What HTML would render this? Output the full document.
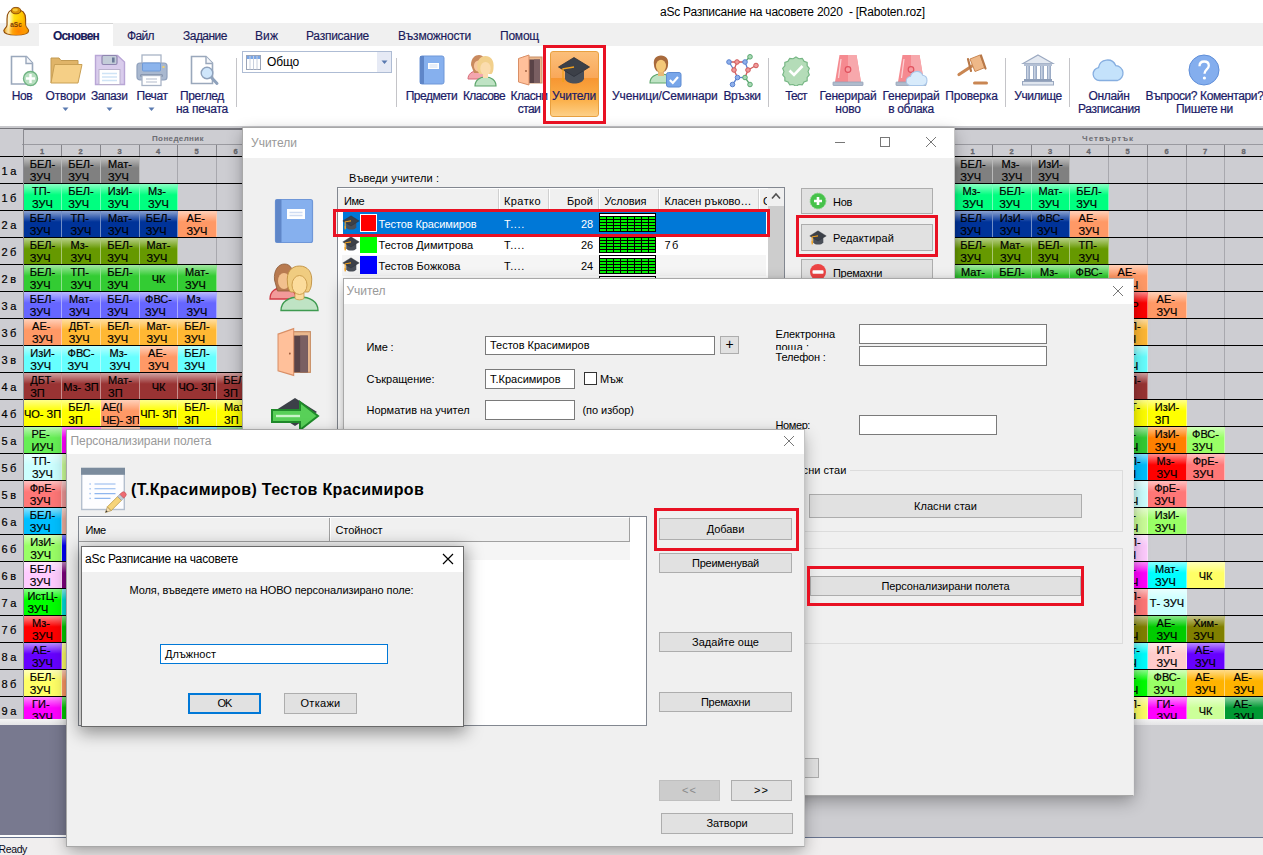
<!DOCTYPE html><html><head><meta charset="utf-8"><title>aSc</title>
<style>
html,body{margin:0;padding:0}
body{width:1263px;height:855px;position:relative;overflow:hidden;background:#f0f0f0;font-family:"Liberation Sans",sans-serif;}
.abs{position:absolute}

.dayh{font-size:8px;font-weight:bold;color:#6c6c72;text-align:center;line-height:19px}
.dayh span{display:inline-block}
.pnum{font-size:7.5px;font-weight:bold;color:#66666c;text-align:center;line-height:13px;-webkit-text-stroke:0.3px #66666c}
.cell{-webkit-text-stroke:0.2px #000;font-size:11px;line-height:13px;color:#000;text-align:center;overflow:hidden;display:flex;align-items:center;justify-content:center}
.cell span{display:block;text-align:left;white-space:nowrap;position:relative;top:1px}
.cell.L{justify-content:flex-start}
.cell.L span{text-align:left;padding-left:1px;letter-spacing:-0.3px}
.rowl{-webkit-text-stroke:0.2px #000;font-size:11px;color:#000;text-align:left;padding-left:1.5px;box-sizing:border-box;background:#cdcdd2}

.rlab{-webkit-text-stroke:0.2px #1a1a66;font-size:12px;line-height:14px;color:#1a1a66;text-align:center;white-space:nowrap}
.rlab span,.tab span,.ttl span,.cmb span{display:inline-block;white-space:nowrap}
.tab{-webkit-text-stroke:0.15px #1a1a5a;font-size:12px;line-height:14px;color:#1a1a5a;white-space:nowrap}
.tab.b{font-weight:bold}
.ttl{font-size:12px;line-height:15px;color:#000;white-space:nowrap}
.cmb{font-size:12px;line-height:14px;color:#000;white-space:nowrap}

.dlg{background:#f0f0f0;border:1px solid #a8a8a8;border-right-color:#c4c4c4;box-sizing:border-box;box-shadow:0 6px 16px -1px rgba(0,0,0,0.32),0 0 4px rgba(0,0,0,0.07)}
.dlg2{background:#f0f0f0;border:1px solid #6a6a6a;box-sizing:border-box;box-shadow:0 4px 16px 2px rgba(0,0,0,0.40)}
.dt{font-size:11px;line-height:13px;color:#000;white-space:nowrap}
.dt span,.wt span,.wt2 span,.hd span,.fit{display:inline-block;white-space:nowrap}
.wt{font-size:12px;line-height:14px;color:#999;white-space:nowrap}
.wt2{font-size:12px;line-height:14px;color:#000;white-space:nowrap}
.hd{font-size:16px;line-height:20px;font-weight:bold;color:#000;white-space:nowrap}
.btn{background:#e1e1e1;border:1px solid #adadad;box-sizing:border-box;font-size:11px;color:#000;text-align:center;white-space:nowrap}
.btn.dis{background:#cccccc;border-color:#bfbfbf;color:#8a8a8a}
.btn.def{border:2px solid #0078d7;line-height:17px !important}
.inp{background:#fff;border:1px solid #7a7a7a;box-sizing:border-box;font-size:11px;color:#000;padding-left:4px;white-space:nowrap;overflow:hidden}
.grp{border:1px solid #dcdcdc;box-sizing:border-box}
</style></head>
<body>
<!-- main window -->
<div class="abs" style="left:0;top:0;width:1263px;height:23px;background:#fff"></div>
<div class="abs ttl" style="left:660px;top:4.500px;"><span style="letter-spacing: -0.23px;">aSc Разписание на часовете 2020&nbsp; - [Raboten.roz]</span></div>
<div class="abs" style="left:0;top:23px;width:1263px;height:23px;background:#f0f0f0"></div>
<div class="abs" style="left:39px;top:23px;width:74px;height:23px;background:#fff;border-top:1px solid #d4d4d4;box-sizing:border-box"></div>
<div class="abs tab b" style="left:53px;top:29px"><span style="letter-spacing: -0.82px;">Основен</span></div>
<div class="abs tab" style="left:127px;top:29px"><span style="letter-spacing: -0.63px;">Файл</span></div>
<div class="abs tab" style="left:183px;top:29px"><span style="letter-spacing: -0.52px;">Задание</span></div>
<div class="abs tab" style="left:255px;top:29px"><span style="letter-spacing: 0.09px;">Виж</span></div>
<div class="abs tab" style="left:306px;top:29px"><span style="letter-spacing: -0.25px;">Разписание</span></div>
<div class="abs tab" style="left:398px;top:29px"><span style="letter-spacing: -0.21px;">Възможности</span></div>
<div class="abs tab" style="left:500px;top:29px"><span style="letter-spacing: -0.22px;">Помощ</span></div>
<svg class="abs" style="left:2px;top:5px" width="30" height="32" viewBox="0 0 30 32">
<defs><linearGradient id="bg" x1="0" y1="0" x2="1" y2="0"><stop offset="0" stop-color="#e89a00"></stop><stop offset="0.2" stop-color="#fffbe0"></stop><stop offset="0.42" stop-color="#ffe010"></stop><stop offset="0.75" stop-color="#ffc400"></stop><stop offset="1" stop-color="#e08600"></stop></linearGradient>
<radialGradient id="bg2" cx="0.6" cy="0.86" r="0.5"><stop offset="0" stop-color="#ff8200" stop-opacity="1"></stop><stop offset="0.5" stop-color="#ff9400" stop-opacity="0.8"></stop><stop offset="1" stop-color="#ffa800" stop-opacity="0"></stop></radialGradient></defs>
<path d="M14 4.500C21 4.500 23.600 8 23.600 14L23.600 20C23.600 22.600 26.600 23.400 26.600 25.800C26.600 28.800 20.500 30 14 30C7.500 30 1.800 28.800 1.800 25.800C1.800 23.400 5 22.600 5 20L5 14C5 8 7 4.500 14 4.500Z" fill="url(#bg)" stroke="#8e4a08" stroke-width="1.1"></path>
<path d="M14 4.500C21 4.500 23.600 8 23.600 14L23.600 20C23.600 22.600 26.600 23.400 26.600 25.800C26.600 28.800 20.500 30 14 30C7.500 30 1.800 28.800 1.800 25.800C1.800 23.400 5 22.600 5 20L5 14C5 8 7 4.500 14 4.500Z" fill="url(#bg2)"></path>
<ellipse cx="14" cy="5.600" rx="4.700" ry="3.200" fill="#d89208" stroke="#8a4a08" stroke-width="0.9"></ellipse>
<ellipse cx="13.300" cy="5" rx="2.600" ry="1.400" fill="#f8c838"></ellipse>
<text x="14" y="22.300" font-family="Liberation Sans, sans-serif" font-size="6.500" font-weight="bold" fill="#7a3a08" text-anchor="middle">aSc</text></svg>
<div class="abs" style="left:0;top:46px;width:1263px;height:81px;background:#fff"></div>
<div class="abs" style="left:0;top:126px;width:1263px;height:2px;background:#c8c8cc"></div>
<div class="abs" style="left:550px;top:51px;width:49px;height:66px;border-radius:3px;border:1px solid #e8a040;box-sizing:border-box;background:linear-gradient(to bottom,#fbbf7a 0%,#f9a85a 40%,#f79632 41%,#fbb04a 75%,#fdd088 100%)"></div>
<svg class="abs" style="left:9px;top:54px" width="32" height="34" viewBox="0 0 32 34">
<path d="M2.5 2.5h15l6 6.5v21h-21z" fill="#fff" stroke="#9aa8bc" stroke-width="1.6"></path>
<path d="M17 2.5v7h6.5" fill="#f4f6fa" stroke="#9aa8bc" stroke-width="1.4"></path>
<circle cx="21.5" cy="24.5" r="7" fill="#b8dfc0" stroke="#6fb382" stroke-width="1.4"></circle>
<path d="M21.5 20v9M17 24.5h9" stroke="#fff" stroke-width="2.4"></path></svg>
<svg class="abs" style="left:49px;top:54px" width="36" height="32" viewBox="0 0 36 32">
<path d="M2 29V4h8l2 2.5h17V11" fill="#e0b468" stroke="#c29a52" stroke-width="1"></path>
<path d="M2 29l3.5-18.5h27.5l-4 18.5z" fill="#f5cf86" stroke="#c9a055" stroke-width="1"></path></svg>
<svg class="abs" style="left:94px;top:54px" width="33" height="32" viewBox="0 0 33 32">
<path d="M1.5 1.5h22l7 6.5v22.5h-29z" fill="#d9ccec" stroke="#b9a6d6" stroke-width="1.4"></path>
<rect x="8" y="1.5" width="15" height="9" rx="1.5" fill="#c3ccd8" stroke="#8f86b0" stroke-width="1.2"></rect>
<rect x="18" y="3.5" width="2.6" height="5" fill="#6b7a98"></rect>
<rect x="5" y="15.5" width="21" height="15" fill="#fff" stroke="#b9b0cc" stroke-width="1"></rect>
<path d="M8 19.5h15M8 23h15M8 26.5h15" stroke="#cfe4f6" stroke-width="1.4"></path></svg>
<svg class="abs" style="left:135px;top:53px" width="34" height="34" viewBox="0 0 34 34">
<rect x="7" y="2" width="19" height="10" fill="#fff" stroke="#a9b4c6" stroke-width="1.3"></rect>
<rect x="2" y="10" width="30" height="17" rx="3" fill="#a9b8cf" stroke="#8fa0bc" stroke-width="1.2"></rect>
<rect x="7.5" y="10" width="18" height="8" rx="1" fill="#8cb4ec" stroke="#6f9ad8" stroke-width="1"></rect>
<rect x="27.5" y="13" width="2" height="2" fill="#f2d06a"></rect>
<rect x="5" y="21" width="23" height="3" rx="1.5" fill="#8493ad"></rect>
<rect x="7" y="22.5" width="19" height="10" fill="#fff" stroke="#a9b4c6" stroke-width="1.3"></rect>
<path d="M11 26h11M11 29h11" stroke="#b4bccb" stroke-width="1.2"></path></svg>
<svg class="abs" style="left:189px;top:54px" width="32" height="32" viewBox="0 0 32 32">
<path d="M2.5 2.5h14.5l6.5 6.5v20.5h-21z" fill="#fff" stroke="#9aa8bc" stroke-width="1.6"></path>
<path d="M17 2.5v7h6.5" fill="#f4f6fa" stroke="#9aa8bc" stroke-width="1.4"></path>
<path d="M22 23l6 6.5" stroke="#8fa2bc" stroke-width="3" stroke-linecap="round"></path>
<circle cx="18" cy="19" r="5.8" fill="#cfe6fb" stroke="#8fa2bc" stroke-width="1.4"></circle></svg>
<svg class="abs" style="left:419px;top:55px" width="26" height="30" viewBox="0 0 26 30">
<rect x="1" y="1" width="24" height="28" rx="2" fill="#86b0ee" stroke="#6f97d8" stroke-width="1"></rect>
<rect x="1" y="1" width="4" height="28" fill="#5f86c8"></rect>
<rect x="9" y="8" width="11" height="6" fill="#fff"></rect><path d="M10.5 10h8M10.5 12h8" stroke="#cfdcf2" stroke-width="1"></path></svg>
<svg class="abs" style="left:466px;top:53px" width="36" height="34" viewBox="0 0 36 34">
<path d="M2 26c0-5 4-8 9-8s9 3 9 8z" fill="#f4a6ae" stroke="#d66a78" stroke-width="1"></path>
<path d="M5 12c0-7 4-10 8-10s8 4 7 12l-2 6h-10z" fill="#c98a5e"></path>
<ellipse cx="12.5" cy="13" rx="4.6" ry="5.6" fill="#f7c79e"></ellipse>
<path d="M9 33c0-6 5-9 10.5-9s10.500 3 10.500 9z" fill="#bfe3c4" stroke="#5ea66c" stroke-width="1.2"></path>
<path d="M11.500 15c-1-8 3-12 8-12s9 4 8 12c0 3-1 5-2 6h-12c-1-1-2-3-2-6z" fill="#f2d08c"></path>
<ellipse cx="19.5" cy="15.500" rx="5.200" ry="6.600" fill="#fbdcae"></ellipse>
<rect x="17" y="21" width="5" height="4" fill="#fbdcae"></rect></svg>
<svg class="abs" style="left:516px;top:54px" width="28" height="32" viewBox="0 0 28 32">
<rect x="8" y="3" width="18" height="26" fill="#eab88e" stroke="#c98f66" stroke-width="1"></rect>
<rect x="11" y="5.500" width="13" height="23.500" fill="#5a4347"></rect>
<rect x="18" y="5.500" width="6" height="23.500" fill="#7a5f62"></rect>
<path d="M2.500 4.500l10.500-3.500v30l-10.500-3z" fill="#ffc09a" stroke="#d98f66" stroke-width="1"></path>
<circle cx="10" cy="17" r="0.900" fill="#9a5a3a"></circle></svg>
<svg class="abs" style="left:557px;top:55.500px" width="34" height="30" viewBox="0 0 34 30">
<path d="M8 15v8c2 3.500 5.500 4.500 9.500 4.500s7.500-1 9.500-4.500v-8z" fill="#4a4f58"></path>
<path d="M17 1.500l15.500 9.500-15.500 9.500-15.500-9.500z" fill="#3c4048" stroke="#2c3038" stroke-width="0.800"></path>
<path d="M17 11l-11 1.800v11" fill="none" stroke="#f0a020" stroke-width="1.400"></path>
<rect x="5.200" y="22" width="1.800" height="4" fill="#f0a020"></rect></svg>
<svg class="abs" style="left:648px;top:54px" width="36" height="34" viewBox="0 0 36 34">
<path d="M2 29c0-6 5-9 11-9s11 3 11 9z" fill="#bfe3c4" stroke="#5ea66c" stroke-width="1.100"></path>
<rect x="10" y="17" width="6" height="5" fill="#e8b878"></rect>
<path d="M6 11c-1-6 2-9.500 7-9.500s8 3.500 7 9.500c0 3-1.500 5-3 6.500h-8c-1.500-1.500-3-3.500-3-6.500z" fill="#a86a3c"></path>
<ellipse cx="13" cy="12" rx="5" ry="6.300" fill="#f4c878"></ellipse>
<rect x="18.500" y="18.500" width="14.500" height="14.500" rx="2" fill="#78a6ea" stroke="#5f8cd2" stroke-width="1"></rect>
<path d="M21.800 26l3 3 5.200-6" fill="none" stroke="#fff" stroke-width="2.200"></path></svg>
<svg class="abs" style="left:725px;top:53.500px" width="36" height="36" viewBox="0 0 36 36">
<g stroke-width="1.300" fill="none"><path d="M4 8l8 0M12 8l8 0" stroke="#d05a5a"></path><path d="M4 8l5 8" stroke="#5a82d0"></path><path d="M12 8l-3 8" stroke="#d05a5a"></path><path d="M20 8l5-5.500" stroke="#5aa870"></path><path d="M20 8l3 8" stroke="#5a82d0"></path><path d="M23 16l8-4.500" stroke="#d05a5a"></path><path d="M9 16l3.500 7.500" stroke="#d05a5a"></path><path d="M23 16l-3 7.500" stroke="#d05a5a"></path><path d="M12.500 23.500h7.500" stroke="#5a82d0"></path><path d="M12.500 23.500l-5 7" stroke="#5a82d0"></path><path d="M20 23.500l5 7" stroke="#5aa870"></path></g>
<g stroke-width="1"><circle cx="4" cy="8" r="2.300" fill="#8fb0ea" stroke="#5a82d0"></circle><circle cx="12" cy="8" r="2.300" fill="#f09a9a" stroke="#d05a5a"></circle><circle cx="20" cy="8" r="2.300" fill="#8fb0ea" stroke="#5a82d0"></circle><circle cx="25" cy="2.800" r="2.300" fill="#a8d8b4" stroke="#5aa870"></circle><circle cx="9" cy="16" r="2.300" fill="#f09a9a" stroke="#d05a5a"></circle><circle cx="23" cy="16" r="2.300" fill="#f09a9a" stroke="#d05a5a"></circle><circle cx="31" cy="11.500" r="2.300" fill="#f09a9a" stroke="#d05a5a"></circle><circle cx="12.500" cy="23.500" r="2.300" fill="#8fb0ea" stroke="#5a82d0"></circle><circle cx="20" cy="23.500" r="2.300" fill="#a8d8b4" stroke="#5aa870"></circle><circle cx="7.500" cy="30.500" r="2.300" fill="#8fb0ea" stroke="#5a82d0"></circle><circle cx="25" cy="30.500" r="2.300" fill="#a8d8b4" stroke="#5aa870"></circle></g></svg>
<svg class="abs" style="left:780px;top:54px" width="32" height="32" viewBox="0 0 32 32">
<path d="M16 1.500l3.200 2 3.700-.500 2 3.200 3.500 1.400v3.800l2.400 2.900-1.400 3.500 1.400 3.500-2.400 2.900v3.800l-3.500 1.400-2 3.200-3.700-.500-3.200 2-3.200-2-3.700.500-2-3.200-3.500-1.400v-3.800l-2.400-2.900 1.400-3.500-1.400-3.500 2.400-2.900v-3.800l3.500-1.400 2-3.200 3.700.500z" transform="translate(1.600 1.600) scale(0.900)" fill="#b4dcb8" stroke="#76b684" stroke-width="1.300"></path>
<path d="M9.500 16.500l4.500 4.500 8.500-9" fill="none" stroke="#fff" stroke-width="2.600"></path></svg>
<svg class="abs" style="left:832px;top:53px" width="32" height="34" viewBox="0 0 32 34">
<path d="M7.500 2h17l4.500 27h-26z" fill="#f58a90"></path>
<path d="M16 2h8.500l4.500 27h-13z" fill="#f7a8ac"></path>
<path d="M9 6l-2.500 19" stroke="#fbd0d2" stroke-width="1.300"></path>
<circle cx="16" cy="16.500" r="2.800" fill="#f79aa0" stroke="#e0525e" stroke-width="1.200"></circle>
<rect x="1" y="29" width="30" height="3.500" rx="0.500" fill="#b0bccd" stroke="#94a2b8" stroke-width="0.800"></rect></svg>
<svg class="abs" style="left:895px;top:53px" width="32" height="34" viewBox="0 0 32 34">
<path d="M7.500 2h17l4.500 27h-26z" fill="#f58a90"></path>
<path d="M16 2h8.500l4.500 27h-13z" fill="#f7a8ac"></path>
<path d="M9 6l-2.500 19" stroke="#fbd0d2" stroke-width="1.300"></path>
<circle cx="16" cy="16.500" r="2.800" fill="#f79aa0" stroke="#e0525e" stroke-width="1.200"></circle>
<rect x="1" y="29" width="30" height="3.500" rx="0.500" fill="#b0bccd" stroke="#94a2b8" stroke-width="0.800"></rect></svg><svg class="abs" style="left:905px;top:69px" width="24" height="18" viewBox="0 0 24 18">
<path d="M6 16.500a4.500 4.500 0 0 1-.500-9 6.500 6.500 0 0 1 12.300-1.200 5.200 5.200 0 0 1 0 10.200z" fill="#d8ebfb" stroke="#a8c6e8" stroke-width="1.100"></path></svg>
<svg class="abs" style="left:956px;top:53px" width="34" height="34" viewBox="0 0 34 34">
<path d="M3 21.500l13-8.500" stroke="#c98652" stroke-width="3.200" stroke-linecap="round"></path>
<path d="M14 6l10-4 5 12.500-10 4z" fill="#eeb888" stroke="#c98652" stroke-width="1"></path>
<path d="M13 4.500l3 12M26 1l4.500 13" stroke="#b87848" stroke-width="2.200" stroke-linecap="round" transform="translate(-1 1.500)"></path>
<rect x="17" y="28.500" width="15" height="3" rx="1.500" fill="#c98652"></rect></svg>
<svg class="abs" style="left:1021px;top:53px" width="34" height="34" viewBox="0 0 34 34">
<path d="M17 2l15 8.500h-30z" fill="#e4e9f1" stroke="#9aa8c0" stroke-width="1.200"></path>
<rect x="3" y="10.500" width="28" height="2.500" fill="#b4c0d4"></rect>
<g fill="#9cacc6"><rect x="5" y="13" width="4" height="13"></rect><rect x="12" y="13" width="4" height="13"></rect><rect x="19" y="13" width="4" height="13"></rect><rect x="26" y="13" width="4" height="13"></rect></g>
<g fill="#c8d2e2"><rect x="6" y="13" width="1.500" height="13"></rect><rect x="13" y="13" width="1.500" height="13"></rect><rect x="20" y="13" width="1.500" height="13"></rect><rect x="27" y="13" width="1.500" height="13"></rect></g>
<rect x="3" y="26" width="28" height="2.500" fill="#8e9eb8"></rect>
<rect x="1.500" y="28.500" width="31" height="3.500" fill="#dfe5ee" stroke="#9aa8c0" stroke-width="1"></rect></svg>
<svg class="abs" style="left:1091px;top:58px" width="36" height="24" viewBox="0 0 36 24">
<path d="M8.500 22.500a6.500 6.500 0 0 1-1-12.900 9 9 0 0 1 17.200-2 7.600 7.600 0 0 1 1.800 14.900z" fill="#c4e2fb" stroke="#86aee0" stroke-width="1.300"></path></svg>
<svg class="abs" style="left:1188px;top:54px" width="32" height="32" viewBox="0 0 32 32">
<circle cx="16" cy="16" r="15" fill="#84aeee" stroke="#5f8ed8" stroke-width="1"></circle>
<path d="M11.500 12.200c0-3 2-4.700 4.700-4.700s4.600 1.700 4.600 4.200c0 3.600-4.300 3.800-4.300 8" fill="none" stroke="#fff" stroke-width="2.300"></path>
<circle cx="16.400" cy="24" r="1.600" fill="#fff"></circle></svg>
<div class="abs rlab" style="left:-78px;top:89px;width:200px"><span style="letter-spacing: -0.41px;">Нов</span></div>
<div class="abs rlab" style="left:-34.5px;top:89px;width:200px"><span style="letter-spacing: -0.19px;">Отвори</span></div>
<svg class="abs" style="left:61.5px;top:107px" width="8" height="5"><path d="M0.5 0.5h6l-3 3.5z" fill="#5a7ab0"></path></svg>
<div class="abs rlab" style="left:9.200000000000003px;top:89px;width:200px"><span style="letter-spacing: -0.45px;">Запази</span></div>
<svg class="abs" style="left:105.5px;top:107px" width="8" height="5"><path d="M0.5 0.5h6l-3 3.5z" fill="#5a7ab0"></path></svg>
<div class="abs rlab" style="left:52px;top:89px;width:200px"><span style="letter-spacing: -0.41px;">Печат</span></div>
<svg class="abs" style="left:148px;top:107px" width="8" height="5"><path d="M0.5 0.5h6l-3 3.5z" fill="#5a7ab0"></path></svg>
<div class="abs rlab" style="left:102px;top:89px;width:200px"><span style="letter-spacing: -0.36px;">Преглед</span></div>
<div class="abs rlab" style="left:102px;top:102px;width:200px"><span style="letter-spacing: -0.23px;">на печата</span></div>
<div class="abs" style="left:236px;top:58px;width:1px;height:49px;background:#c4c4c8"></div>
<div class="abs" style="left:396px;top:58px;width:1px;height:49px;background:#c4c4c8"></div>
<div class="abs" style="left:768px;top:58px;width:1px;height:49px;background:#c4c4c8"></div>
<div class="abs" style="left:1005px;top:58px;width:1px;height:49px;background:#c4c4c8"></div>
<div class="abs" style="left:1069px;top:58px;width:1px;height:49px;background:#c4c4c8"></div>
<div class="abs" style="left:242px;top:51px;width:150px;height:22px;border:1px solid #aebcd4;box-sizing:border-box;background:#fff"></div>
<div class="abs" style="left:377px;top:52px;width:14px;height:20px;background:#e6eaf5"></div>
<svg class="abs" style="left:380.5px;top:60px" width="8" height="5"><path d="M0.5 0.5h6l-3 3.5z" fill="#5a7ab0"></path></svg>
<svg class="abs" style="left:246px;top:55px" width="15" height="15" viewBox="0 0 15 15"><rect x="0.500" y="0.500" width="14" height="14" fill="#fff" stroke="#9aa4b8" stroke-width="1"></rect><rect x="1" y="1" width="13" height="3" fill="#7aa6e6"></rect><path d="M4 1v13.500M7.500 1v13.500M11 1v13.500" stroke="#c8d0de" stroke-width="1"></path></svg>
<div class="abs cmb" style="left:267px;top:55px"><span style="letter-spacing: -0.16px;">Общо</span></div>
<div class="abs rlab" style="left:331.5px;top:89px;width:200px"><span style="letter-spacing: -0.48px;">Предмети</span></div>
<div class="abs rlab" style="left:384px;top:89px;width:200px"><span style="letter-spacing: -0.63px;">Класове</span></div>
<div class="abs rlab" style="left:429px;top:89px;width:200px"><span style="letter-spacing: -0.5px;">Класни</span></div>
<div class="abs rlab" style="left:429px;top:102px;width:200px"><span style="letter-spacing: -0.56px;">стаи</span></div>
<div class="abs rlab" style="left:474px;top:89px;width:200px"><span style="letter-spacing: -0.27px;">Учители</span></div>
<div class="abs rlab" style="left:564.8px;top:89px;width:200px"><span style="letter-spacing: -0.14px;">Ученици/Семинари</span></div>
<div class="abs rlab" style="left:642px;top:89px;width:200px"><span style="letter-spacing: -0.44px;">Връзки</span></div>
<div class="abs rlab" style="left:696px;top:89px;width:200px"><span style="letter-spacing: -0.88px;">Тест</span></div>
<div class="abs rlab" style="left:748px;top:89px;width:200px"><span style="letter-spacing: -0.23px;">Генерирай</span></div>
<div class="abs rlab" style="left:748px;top:102px;width:200px"><span style="letter-spacing: -0.15px;">ново</span></div>
<div class="abs rlab" style="left:811px;top:89px;width:200px"><span style="letter-spacing: -0.23px;">Генерирай</span></div>
<div class="abs rlab" style="left:811px;top:102px;width:200px"><span style="letter-spacing: -0.37px;">в облака</span></div>
<div class="abs rlab" style="left:871.5px;top:89px;width:200px"><span style="letter-spacing: -0.16px;">Проверка</span></div>
<div class="abs rlab" style="left:938px;top:89px;width:200px"><span style="letter-spacing: -0.47px;">Училище</span></div>
<div class="abs rlab" style="left:1009px;top:89px;width:200px"><span style="letter-spacing: -0.33px;">Онлайн</span></div>
<div class="abs rlab" style="left:1009px;top:102px;width:200px"><span style="letter-spacing: -0.34px;">Разписания</span></div>
<div class="abs rlab" style="left:1104.5px;top:89px;width:200px"><span style="letter-spacing: -0.39px;">Въпроси? Коментари?</span></div>
<div class="abs rlab" style="left:1104.5px;top:102px;width:200px"><span style="letter-spacing: -0.33px;">Пишете ни</span></div>
<div class="abs" style="left:0;top:128px;width:1263px;height:591px;overflow:hidden"><div class="abs" style="left:0;top:-128px;width:1263px;height:855px">
<div class="abs" style="left:0;top:128px;width:1263px;height:596px;background:#cdcdd2"></div>
<div class="abs" style="left:0;top:128px;width:1263px;height:2px;background:#75757b"></div>
<div class="abs" style="left:0;top:129px;width:23px;height:27px;background:#cdcdd2"></div>
<div class="abs dayh" style="left:23px;top:129px;width:310px;height:15px;"><span class="fit" style="letter-spacing: 0.37px;">Понеделник</span></div>
<div class="abs dayh" style="left:953px;top:129px;width:310px;height:15px;"><span class="fit" style="letter-spacing: 1px;">Четвъртък</span></div>
<div class="abs pnum" style="left:23px;top:145px;width:38px;height:11px;">1</div>
<div class="abs pnum" style="left:61px;top:145px;width:39px;height:11px;">2</div>
<div class="abs pnum" style="left:100px;top:145px;width:39px;height:11px;">3</div>
<div class="abs pnum" style="left:139px;top:145px;width:38px;height:11px;">4</div>
<div class="abs pnum" style="left:177px;top:145px;width:39px;height:11px;">5</div>
<div class="abs pnum" style="left:216px;top:145px;width:39px;height:11px;">6</div>
<div class="abs pnum" style="left:255px;top:145px;width:39px;height:11px;">7</div>
<div class="abs pnum" style="left:294px;top:145px;width:39px;height:11px;">8</div>
<div class="abs pnum" style="left:953px;top:145px;width:39px;height:11px;">1</div>
<div class="abs pnum" style="left:992px;top:145px;width:39px;height:11px;">2</div>
<div class="abs pnum" style="left:1031px;top:145px;width:38px;height:11px;">3</div>
<div class="abs pnum" style="left:1069px;top:145px;width:39px;height:11px;">4</div>
<div class="abs pnum" style="left:1108px;top:145px;width:39px;height:11px;">5</div>
<div class="abs pnum" style="left:1147px;top:145px;width:39px;height:11px;">6</div>
<div class="abs pnum" style="left:1186px;top:145px;width:38px;height:11px;">7</div>
<div class="abs pnum" style="left:1224px;top:145px;width:39px;height:11px;">8</div>
<div class="abs" style="left:22px;top:144px;width:1241px;height:1px;background:#9a9aa0"></div>
<div class="abs" style="left:23px;top:129px;width:1px;height:595px;background:#a8a8ae"></div>
<div class="abs" style="left:23px;top:129px;width:1px;height:27px;background:#85858b"></div>
<div class="abs" style="left:61px;top:145px;width:1px;height:579px;background:#a8a8ae"></div>
<div class="abs" style="left:61px;top:145px;width:1px;height:11px;background:#85858b"></div>
<div class="abs" style="left:100px;top:145px;width:1px;height:579px;background:#a8a8ae"></div>
<div class="abs" style="left:100px;top:145px;width:1px;height:11px;background:#85858b"></div>
<div class="abs" style="left:139px;top:145px;width:1px;height:579px;background:#a8a8ae"></div>
<div class="abs" style="left:139px;top:145px;width:1px;height:11px;background:#85858b"></div>
<div class="abs" style="left:177px;top:145px;width:1px;height:579px;background:#a8a8ae"></div>
<div class="abs" style="left:177px;top:145px;width:1px;height:11px;background:#85858b"></div>
<div class="abs" style="left:216px;top:145px;width:1px;height:579px;background:#a8a8ae"></div>
<div class="abs" style="left:216px;top:145px;width:1px;height:11px;background:#85858b"></div>
<div class="abs" style="left:255px;top:145px;width:1px;height:579px;background:#a8a8ae"></div>
<div class="abs" style="left:255px;top:145px;width:1px;height:11px;background:#85858b"></div>
<div class="abs" style="left:294px;top:145px;width:1px;height:579px;background:#a8a8ae"></div>
<div class="abs" style="left:294px;top:145px;width:1px;height:11px;background:#85858b"></div>
<div class="abs" style="left:333px;top:129px;width:1px;height:595px;background:#a8a8ae"></div>
<div class="abs" style="left:333px;top:129px;width:1px;height:27px;background:#85858b"></div>
<div class="abs" style="left:371px;top:145px;width:1px;height:579px;background:#a8a8ae"></div>
<div class="abs" style="left:371px;top:145px;width:1px;height:11px;background:#85858b"></div>
<div class="abs" style="left:410px;top:145px;width:1px;height:579px;background:#a8a8ae"></div>
<div class="abs" style="left:410px;top:145px;width:1px;height:11px;background:#85858b"></div>
<div class="abs" style="left:449px;top:145px;width:1px;height:579px;background:#a8a8ae"></div>
<div class="abs" style="left:449px;top:145px;width:1px;height:11px;background:#85858b"></div>
<div class="abs" style="left:488px;top:145px;width:1px;height:579px;background:#a8a8ae"></div>
<div class="abs" style="left:488px;top:145px;width:1px;height:11px;background:#85858b"></div>
<div class="abs" style="left:526px;top:145px;width:1px;height:579px;background:#a8a8ae"></div>
<div class="abs" style="left:526px;top:145px;width:1px;height:11px;background:#85858b"></div>
<div class="abs" style="left:565px;top:145px;width:1px;height:579px;background:#a8a8ae"></div>
<div class="abs" style="left:565px;top:145px;width:1px;height:11px;background:#85858b"></div>
<div class="abs" style="left:604px;top:145px;width:1px;height:579px;background:#a8a8ae"></div>
<div class="abs" style="left:604px;top:145px;width:1px;height:11px;background:#85858b"></div>
<div class="abs" style="left:643px;top:129px;width:1px;height:595px;background:#a8a8ae"></div>
<div class="abs" style="left:643px;top:129px;width:1px;height:27px;background:#85858b"></div>
<div class="abs" style="left:682px;top:145px;width:1px;height:579px;background:#a8a8ae"></div>
<div class="abs" style="left:682px;top:145px;width:1px;height:11px;background:#85858b"></div>
<div class="abs" style="left:720px;top:145px;width:1px;height:579px;background:#a8a8ae"></div>
<div class="abs" style="left:720px;top:145px;width:1px;height:11px;background:#85858b"></div>
<div class="abs" style="left:759px;top:145px;width:1px;height:579px;background:#a8a8ae"></div>
<div class="abs" style="left:759px;top:145px;width:1px;height:11px;background:#85858b"></div>
<div class="abs" style="left:798px;top:145px;width:1px;height:579px;background:#a8a8ae"></div>
<div class="abs" style="left:798px;top:145px;width:1px;height:11px;background:#85858b"></div>
<div class="abs" style="left:837px;top:145px;width:1px;height:579px;background:#a8a8ae"></div>
<div class="abs" style="left:837px;top:145px;width:1px;height:11px;background:#85858b"></div>
<div class="abs" style="left:875px;top:145px;width:1px;height:579px;background:#a8a8ae"></div>
<div class="abs" style="left:875px;top:145px;width:1px;height:11px;background:#85858b"></div>
<div class="abs" style="left:914px;top:145px;width:1px;height:579px;background:#a8a8ae"></div>
<div class="abs" style="left:914px;top:145px;width:1px;height:11px;background:#85858b"></div>
<div class="abs" style="left:953px;top:129px;width:1px;height:595px;background:#a8a8ae"></div>
<div class="abs" style="left:953px;top:129px;width:1px;height:27px;background:#85858b"></div>
<div class="abs" style="left:992px;top:145px;width:1px;height:579px;background:#a8a8ae"></div>
<div class="abs" style="left:992px;top:145px;width:1px;height:11px;background:#85858b"></div>
<div class="abs" style="left:1031px;top:145px;width:1px;height:579px;background:#a8a8ae"></div>
<div class="abs" style="left:1031px;top:145px;width:1px;height:11px;background:#85858b"></div>
<div class="abs" style="left:1069px;top:145px;width:1px;height:579px;background:#a8a8ae"></div>
<div class="abs" style="left:1069px;top:145px;width:1px;height:11px;background:#85858b"></div>
<div class="abs" style="left:1108px;top:145px;width:1px;height:579px;background:#a8a8ae"></div>
<div class="abs" style="left:1108px;top:145px;width:1px;height:11px;background:#85858b"></div>
<div class="abs" style="left:1147px;top:145px;width:1px;height:579px;background:#a8a8ae"></div>
<div class="abs" style="left:1147px;top:145px;width:1px;height:11px;background:#85858b"></div>
<div class="abs" style="left:1186px;top:145px;width:1px;height:579px;background:#a8a8ae"></div>
<div class="abs" style="left:1186px;top:145px;width:1px;height:11px;background:#85858b"></div>
<div class="abs" style="left:1224px;top:145px;width:1px;height:579px;background:#a8a8ae"></div>
<div class="abs" style="left:1224px;top:145px;width:1px;height:11px;background:#85858b"></div>
<div class="abs" style="left:1263px;top:129px;width:1px;height:595px;background:#a8a8ae"></div>
<div class="abs" style="left:1263px;top:129px;width:1px;height:27px;background:#85858b"></div>
<div class="abs cell" style="left:24px;top:157px;width:37px;height:26px;background:linear-gradient(to bottom,#c5c5c5 0%,#808080 42%,#808080 100%)"><span>БЕЛ-<br>ЗУЧ</span></div>
<div class="abs" style="left:61px;top:157px;width:1px;height:26px;background:#b9b9b9"></div>
<div class="abs cell" style="left:62px;top:157px;width:38px;height:26px;background:linear-gradient(to bottom,#c5c5c5 0%,#808080 42%,#808080 100%)"><span>БЕЛ-<br>ЗУЧ</span></div>
<div class="abs" style="left:100px;top:157px;width:1px;height:26px;background:#b9b9b9"></div>
<div class="abs cell" style="left:101px;top:157px;width:38px;height:26px;background:linear-gradient(to bottom,#c5c5c5 0%,#808080 42%,#808080 100%)"><span>Мат-<br>ЗУЧ</span></div>
<div class="abs" style="left:139px;top:157px;width:1px;height:26px;background:#b9b9b9"></div>
<div class="abs cell" style="left:24px;top:184px;width:37px;height:26px;background:linear-gradient(to bottom,#8cffc5 0%,#00ff80 42%,#00ff80 100%)"><span>ТП-<br>ЗУЧ</span></div>
<div class="abs" style="left:61px;top:184px;width:1px;height:26px;background:#72ffb9"></div>
<div class="abs cell" style="left:62px;top:184px;width:38px;height:26px;background:linear-gradient(to bottom,#8cffc5 0%,#00ff80 42%,#00ff80 100%)"><span>БЕЛ-<br>ЗУЧ</span></div>
<div class="abs" style="left:100px;top:184px;width:1px;height:26px;background:#72ffb9"></div>
<div class="abs cell" style="left:101px;top:184px;width:38px;height:26px;background:linear-gradient(to bottom,#8cffc5 0%,#00ff80 42%,#00ff80 100%)"><span>ИзИ-<br>ЗУЧ</span></div>
<div class="abs" style="left:139px;top:184px;width:1px;height:26px;background:#72ffb9"></div>
<div class="abs cell" style="left:140px;top:184px;width:37px;height:26px;background:linear-gradient(to bottom,#8cffc5 0%,#00ff80 42%,#00ff80 100%)"><span>Мз-<br>ЗУЧ</span></div>
<div class="abs" style="left:177px;top:184px;width:1px;height:26px;background:#72ffb9"></div>
<div class="abs cell" style="left:24px;top:211px;width:37px;height:26px;background:linear-gradient(to bottom,#8ca3d1 0%,#003399 42%,#003399 100%)"><span>БЕЛ-<br>ЗУЧ</span></div>
<div class="abs" style="left:61px;top:211px;width:1px;height:26px;background:#728ec6"></div>
<div class="abs cell" style="left:62px;top:211px;width:38px;height:26px;background:linear-gradient(to bottom,#8ca3d1 0%,#003399 42%,#003399 100%)"><span>ТП-<br>ЗУЧ</span></div>
<div class="abs" style="left:100px;top:211px;width:1px;height:26px;background:#728ec6"></div>
<div class="abs cell" style="left:101px;top:211px;width:38px;height:26px;background:linear-gradient(to bottom,#8ca3d1 0%,#003399 42%,#003399 100%)"><span>Мат-<br>ЗУЧ</span></div>
<div class="abs" style="left:139px;top:211px;width:1px;height:26px;background:#728ec6"></div>
<div class="abs cell" style="left:140px;top:211px;width:37px;height:26px;background:linear-gradient(to bottom,#8ca3d1 0%,#003399 42%,#003399 100%)"><span>БЕЛ-<br>ЗУЧ</span></div>
<div class="abs" style="left:177px;top:211px;width:1px;height:26px;background:#728ec6"></div>
<div class="abs cell" style="left:178px;top:211px;width:38px;height:26px;background:linear-gradient(to bottom,#ffd1ba 0%,#ff9966 42%,#ff9966 100%)"><span>АЕ-<br>ЗУЧ</span></div>
<div class="abs" style="left:216px;top:211px;width:1px;height:26px;background:#ffc6aa"></div>
<div class="abs cell" style="left:24px;top:238px;width:37px;height:26px;background:linear-gradient(to bottom,#bad18c 0%,#669900 42%,#669900 100%)"><span>БЕЛ-<br>ЗУЧ</span></div>
<div class="abs" style="left:61px;top:238px;width:1px;height:26px;background:#aac672"></div>
<div class="abs cell" style="left:62px;top:238px;width:38px;height:26px;background:linear-gradient(to bottom,#bad18c 0%,#669900 42%,#669900 100%)"><span>Мз-<br>ЗУЧ</span></div>
<div class="abs" style="left:100px;top:238px;width:1px;height:26px;background:#aac672"></div>
<div class="abs cell" style="left:101px;top:238px;width:38px;height:26px;background:linear-gradient(to bottom,#bad18c 0%,#669900 42%,#669900 100%)"><span>БЕЛ-<br>ЗУЧ</span></div>
<div class="abs" style="left:139px;top:238px;width:1px;height:26px;background:#aac672"></div>
<div class="abs cell" style="left:140px;top:238px;width:37px;height:26px;background:linear-gradient(to bottom,#bad18c 0%,#669900 42%,#669900 100%)"><span>Мат-<br>ЗУЧ</span></div>
<div class="abs" style="left:177px;top:238px;width:1px;height:26px;background:#aac672"></div>
<div class="abs cell" style="left:24px;top:265px;width:37px;height:26px;background:linear-gradient(to bottom,#a3e8a3 0%,#33cc33 42%,#33cc33 100%)"><span>БЕЛ-<br>ЗУЧ</span></div>
<div class="abs" style="left:61px;top:265px;width:1px;height:26px;background:#8ee28e"></div>
<div class="abs cell" style="left:62px;top:265px;width:38px;height:26px;background:linear-gradient(to bottom,#a3e8a3 0%,#33cc33 42%,#33cc33 100%)"><span>ТП-<br>ЗУЧ</span></div>
<div class="abs" style="left:100px;top:265px;width:1px;height:26px;background:#8ee28e"></div>
<div class="abs cell" style="left:101px;top:265px;width:38px;height:26px;background:linear-gradient(to bottom,#a3e8a3 0%,#33cc33 42%,#33cc33 100%)"><span>БЕЛ-<br>ЗУЧ</span></div>
<div class="abs" style="left:139px;top:265px;width:1px;height:26px;background:#8ee28e"></div>
<div class="abs cell one" style="left:140px;top:265px;width:37px;height:26px;background:linear-gradient(to bottom,#a3e8a3 0%,#33cc33 42%,#33cc33 100%)"><span>ЧК</span></div>
<div class="abs" style="left:177px;top:265px;width:1px;height:26px;background:#8ee28e"></div>
<div class="abs cell" style="left:178px;top:265px;width:38px;height:26px;background:linear-gradient(to bottom,#a3e8a3 0%,#33cc33 42%,#33cc33 100%)"><span>Мат-<br>ЗУЧ</span></div>
<div class="abs" style="left:216px;top:265px;width:1px;height:26px;background:#8ee28e"></div>
<div class="abs cell" style="left:24px;top:292px;width:37px;height:26px;background:linear-gradient(to bottom,#babaff 0%,#6666ff 42%,#6666ff 100%)"><span>БЕЛ-<br>ЗУЧ</span></div>
<div class="abs" style="left:61px;top:292px;width:1px;height:26px;background:#aaaaff"></div>
<div class="abs cell" style="left:62px;top:292px;width:38px;height:26px;background:linear-gradient(to bottom,#babaff 0%,#6666ff 42%,#6666ff 100%)"><span>Мат-<br>ЗУЧ</span></div>
<div class="abs" style="left:100px;top:292px;width:1px;height:26px;background:#aaaaff"></div>
<div class="abs cell" style="left:101px;top:292px;width:38px;height:26px;background:linear-gradient(to bottom,#babaff 0%,#6666ff 42%,#6666ff 100%)"><span>БЕЛ-<br>ЗУЧ</span></div>
<div class="abs" style="left:139px;top:292px;width:1px;height:26px;background:#aaaaff"></div>
<div class="abs cell" style="left:140px;top:292px;width:37px;height:26px;background:linear-gradient(to bottom,#babaff 0%,#6666ff 42%,#6666ff 100%)"><span>ФВС-<br>ЗУЧ</span></div>
<div class="abs" style="left:177px;top:292px;width:1px;height:26px;background:#aaaaff"></div>
<div class="abs cell" style="left:178px;top:292px;width:38px;height:26px;background:linear-gradient(to bottom,#babaff 0%,#6666ff 42%,#6666ff 100%)"><span>Мз-<br>ЗУЧ</span></div>
<div class="abs" style="left:216px;top:292px;width:1px;height:26px;background:#aaaaff"></div>
<div class="abs cell" style="left:24px;top:319px;width:37px;height:26px;background:linear-gradient(to bottom,#ffd1ba 0%,#ff9966 42%,#ff9966 100%)"><span>АЕ-<br>ЗУЧ</span></div>
<div class="abs" style="left:61px;top:319px;width:1px;height:26px;background:#ffc6aa"></div>
<div class="abs cell" style="left:62px;top:319px;width:38px;height:26px;background:linear-gradient(to bottom,#ffdfa3 0%,#ffb833 42%,#ffb833 100%)"><span>ДБТ-<br>ЗУЧ</span></div>
<div class="abs" style="left:100px;top:319px;width:1px;height:26px;background:#ffd78e"></div>
<div class="abs cell" style="left:101px;top:319px;width:38px;height:26px;background:linear-gradient(to bottom,#ffdfa3 0%,#ffb833 42%,#ffb833 100%)"><span>БЕЛ-<br>ЗУЧ</span></div>
<div class="abs" style="left:139px;top:319px;width:1px;height:26px;background:#ffd78e"></div>
<div class="abs cell" style="left:140px;top:319px;width:37px;height:26px;background:linear-gradient(to bottom,#ffdfa3 0%,#ffb833 42%,#ffb833 100%)"><span>Мат-<br>ЗУЧ</span></div>
<div class="abs" style="left:177px;top:319px;width:1px;height:26px;background:#ffd78e"></div>
<div class="abs cell" style="left:178px;top:319px;width:38px;height:26px;background:linear-gradient(to bottom,#ffdfa3 0%,#ffb833 42%,#ffb833 100%)"><span>БЕЛ-<br>ЗУЧ</span></div>
<div class="abs" style="left:216px;top:319px;width:1px;height:26px;background:#ffd78e"></div>
<div class="abs cell" style="left:24px;top:346px;width:37px;height:26px;background:linear-gradient(to bottom,#baffff 0%,#66ffff 42%,#66ffff 100%)"><span>ИзИ-<br>ЗУЧ</span></div>
<div class="abs" style="left:61px;top:346px;width:1px;height:26px;background:#aaffff"></div>
<div class="abs cell" style="left:62px;top:346px;width:38px;height:26px;background:linear-gradient(to bottom,#baffff 0%,#66ffff 42%,#66ffff 100%)"><span>ФВС-<br>ЗУЧ</span></div>
<div class="abs" style="left:100px;top:346px;width:1px;height:26px;background:#aaffff"></div>
<div class="abs cell" style="left:101px;top:346px;width:38px;height:26px;background:linear-gradient(to bottom,#baffff 0%,#66ffff 42%,#66ffff 100%)"><span>Мз-<br>ЗУЧ</span></div>
<div class="abs" style="left:139px;top:346px;width:1px;height:26px;background:#aaffff"></div>
<div class="abs cell" style="left:140px;top:346px;width:37px;height:26px;background:linear-gradient(to bottom,#ffd1ba 0%,#ff9966 42%,#ff9966 100%)"><span>АЕ-<br>ЗУЧ</span></div>
<div class="abs" style="left:177px;top:346px;width:1px;height:26px;background:#ffc6aa"></div>
<div class="abs cell" style="left:178px;top:346px;width:38px;height:26px;background:linear-gradient(to bottom,#baffff 0%,#66ffff 42%,#66ffff 100%)"><span>БЕЛ-<br>ЗУЧ</span></div>
<div class="abs" style="left:216px;top:346px;width:1px;height:26px;background:#aaffff"></div>
<div class="abs cell" style="left:24px;top:373px;width:37px;height:26px;background:linear-gradient(to bottom,#d1a3a3 0%,#993333 42%,#993333 100%)"><span>ДБТ-<br>ЗП</span></div>
<div class="abs" style="left:61px;top:373px;width:1px;height:26px;background:#c68e8e"></div>
<div class="abs cell one" style="left:62px;top:373px;width:38px;height:26px;background:linear-gradient(to bottom,#d1a3a3 0%,#993333 42%,#993333 100%)"><span>Мз- ЗП</span></div>
<div class="abs" style="left:100px;top:373px;width:1px;height:26px;background:#c68e8e"></div>
<div class="abs cell" style="left:101px;top:373px;width:38px;height:26px;background:linear-gradient(to bottom,#d1a3a3 0%,#993333 42%,#993333 100%)"><span>Мат-<br>ЗП</span></div>
<div class="abs" style="left:139px;top:373px;width:1px;height:26px;background:#c68e8e"></div>
<div class="abs cell one" style="left:140px;top:373px;width:37px;height:26px;background:linear-gradient(to bottom,#d1a3a3 0%,#993333 42%,#993333 100%)"><span>ЧК</span></div>
<div class="abs" style="left:177px;top:373px;width:1px;height:26px;background:#c68e8e"></div>
<div class="abs cell one" style="left:178px;top:373px;width:38px;height:26px;background:linear-gradient(to bottom,#d1a3a3 0%,#993333 42%,#993333 100%)"><span>ЧО- ЗП</span></div>
<div class="abs" style="left:216px;top:373px;width:1px;height:26px;background:#c68e8e"></div>
<div class="abs cell" style="left:217px;top:373px;width:38px;height:26px;background:linear-gradient(to bottom,#d1a3a3 0%,#993333 42%,#993333 100%)"><span>БЕЛ-<br>ЗП</span></div>
<div class="abs" style="left:255px;top:373px;width:1px;height:26px;background:#c68e8e"></div>
<div class="abs cell one" style="left:24px;top:400px;width:37px;height:26px;background:linear-gradient(to bottom,#ffff8c 0%,#ffff00 42%,#ffff00 100%)"><span>ЧО- ЗП</span></div>
<div class="abs" style="left:61px;top:400px;width:1px;height:26px;background:#ffff72"></div>
<div class="abs cell" style="left:62px;top:400px;width:38px;height:26px;background:linear-gradient(to bottom,#ffff8c 0%,#ffff00 42%,#ffff00 100%)"><span>БЕЛ-<br>ЗП</span></div>
<div class="abs" style="left:100px;top:400px;width:1px;height:26px;background:#ffff72"></div>
<div class="abs cell L" style="left:101px;top:400px;width:38px;height:26px;background:linear-gradient(to bottom,#ffd1ba 0%,#ff9966 42%,#ff9966 100%)"><span>АЕ(I<br>ЧЕ)- ЗП</span></div>
<div class="abs" style="left:139px;top:400px;width:1px;height:26px;background:#ffc6aa"></div>
<div class="abs cell one" style="left:140px;top:400px;width:37px;height:26px;background:linear-gradient(to bottom,#ffff8c 0%,#ffff00 42%,#ffff00 100%)"><span>ЧП- ЗП</span></div>
<div class="abs" style="left:177px;top:400px;width:1px;height:26px;background:#ffff72"></div>
<div class="abs cell" style="left:178px;top:400px;width:38px;height:26px;background:linear-gradient(to bottom,#ffff8c 0%,#ffff00 42%,#ffff00 100%)"><span>БЕЛ-<br>ЗП</span></div>
<div class="abs" style="left:216px;top:400px;width:1px;height:26px;background:#ffff72"></div>
<div class="abs cell" style="left:217px;top:400px;width:38px;height:26px;background:linear-gradient(to bottom,#ffff8c 0%,#ffff00 42%,#ffff00 100%)"><span>Мат-<br>ЗП</span></div>
<div class="abs" style="left:255px;top:400px;width:1px;height:26px;background:#ffff72"></div>
<div class="abs cell" style="left:24px;top:427px;width:37px;height:26px;background:linear-gradient(to bottom,#baf7b2 0%,#66ee55 42%,#66ee55 100%)"><span>РЕ-<br>ИУЧ</span></div>
<div class="abs" style="left:61px;top:427px;width:1px;height:26px;background:#aaf5a1"></div>
<div class="abs cell one" style="left:62px;top:427px;width:38px;height:26px;background:linear-gradient(to bottom,#ff8cff 0%,#ff00ff 42%,#ff00ff 100%)"><span></span></div>
<div class="abs" style="left:100px;top:427px;width:1px;height:26px;background:#ff72ff"></div>
<div class="abs cell" style="left:24px;top:454px;width:37px;height:26px;background:linear-gradient(to bottom,#e8ffff 0%,#ccffff 42%,#ccffff 100%)"><span>ТП-<br>ЗУЧ</span></div>
<div class="abs" style="left:61px;top:454px;width:1px;height:26px;background:#e2ffff"></div>
<div class="abs cell one" style="left:62px;top:454px;width:38px;height:26px;background:linear-gradient(to bottom,#e8ffd1 0%,#ccff99 42%,#ccff99 100%)"><span></span></div>
<div class="abs" style="left:100px;top:454px;width:1px;height:26px;background:#e2ffc6"></div>
<div class="abs cell" style="left:24px;top:481px;width:37px;height:26px;background:linear-gradient(to bottom,#ffc1c1 0%,#ff7777 42%,#ff7777 100%)"><span>ФрЕ-<br>ЗУЧ</span></div>
<div class="abs" style="left:61px;top:481px;width:1px;height:26px;background:#ffb4b4"></div>
<div class="abs cell one" style="left:62px;top:481px;width:38px;height:26px;background:linear-gradient(to bottom,#f7d1d1 0%,#ee9999 42%,#ee9999 100%)"><span></span></div>
<div class="abs" style="left:100px;top:481px;width:1px;height:26px;background:#f5c6c6"></div>
<div class="abs cell" style="left:24px;top:508px;width:37px;height:26px;background:linear-gradient(to bottom,#8ce2ff 0%,#00bfff 42%,#00bfff 100%)"><span>БЕЛ-<br>ЗУЧ</span></div>
<div class="abs" style="left:61px;top:508px;width:1px;height:26px;background:#72dbff"></div>
<div class="abs cell one" style="left:62px;top:508px;width:38px;height:26px;background:linear-gradient(to bottom,#f8dbd4 0%,#f0b0a0 42%,#f0b0a0 100%)"><span></span></div>
<div class="abs" style="left:100px;top:508px;width:1px;height:26px;background:#f6d3ca"></div>
<div class="abs cell" style="left:24px;top:535px;width:37px;height:26px;background:linear-gradient(to bottom,#d1ffba 0%,#99ff66 42%,#99ff66 100%)"><span>ИзИ-<br>ЗУЧ</span></div>
<div class="abs" style="left:61px;top:535px;width:1px;height:26px;background:#c6ffaa"></div>
<div class="abs cell one" style="left:62px;top:535px;width:38px;height:26px;background:linear-gradient(to bottom,#8c8cff 0%,#0000ff 42%,#0000ff 100%)"><span></span></div>
<div class="abs" style="left:100px;top:535px;width:1px;height:26px;background:#7272ff"></div>
<div class="abs cell" style="left:24px;top:562px;width:37px;height:26px;background:linear-gradient(to bottom,#ffe8ff 0%,#ffccff 42%,#ffccff 100%)"><span>БЕЛ-<br>ЗУЧ</span></div>
<div class="abs" style="left:61px;top:562px;width:1px;height:26px;background:#ffe2ff"></div>
<div class="abs cell one" style="left:62px;top:562px;width:38px;height:26px;background:linear-gradient(to bottom,#c58cc5 0%,#800080 42%,#800080 100%)"><span></span></div>
<div class="abs" style="left:100px;top:562px;width:1px;height:26px;background:#b972b9"></div>
<div class="abs cell" style="left:24px;top:589px;width:37px;height:26px;background:linear-gradient(to bottom,#8cff8c 0%,#00ff00 42%,#00ff00 100%)"><span>ИстЦ-<br>ЗУЧ</span></div>
<div class="abs" style="left:61px;top:589px;width:1px;height:26px;background:#72ff72"></div>
<div class="abs cell one" style="left:62px;top:589px;width:38px;height:26px;background:linear-gradient(to bottom,#8cf1f1 0%,#00e0e0 42%,#00e0e0 100%)"><span></span></div>
<div class="abs" style="left:100px;top:589px;width:1px;height:26px;background:#72eded"></div>
<div class="abs cell" style="left:24px;top:616px;width:37px;height:26px;background:linear-gradient(to bottom,#ff8c8c 0%,#ff0000 42%,#ff0000 100%)"><span>Мз-<br>ЗУЧ</span></div>
<div class="abs" style="left:61px;top:616px;width:1px;height:26px;background:#ff7272"></div>
<div class="abs cell one" style="left:62px;top:616px;width:38px;height:26px;background:linear-gradient(to bottom,#8ce88c 0%,#00cc00 42%,#00cc00 100%)"><span></span></div>
<div class="abs" style="left:100px;top:616px;width:1px;height:26px;background:#72e272"></div>
<div class="abs cell" style="left:24px;top:643px;width:37px;height:26px;background:linear-gradient(to bottom,#ba8cff 0%,#6600ff 42%,#6600ff 100%)"><span>АЕ-<br>ЗУЧ</span></div>
<div class="abs" style="left:61px;top:643px;width:1px;height:26px;background:#aa72ff"></div>
<div class="abs cell one" style="left:62px;top:643px;width:38px;height:26px;background:linear-gradient(to bottom,#ffffba 0%,#ffff66 42%,#ffff66 100%)"><span></span></div>
<div class="abs" style="left:100px;top:643px;width:1px;height:26px;background:#ffffaa"></div>
<div class="abs cell" style="left:24px;top:670px;width:37px;height:26px;background:linear-gradient(to bottom,#ffffba 0%,#ffff66 42%,#ffff66 100%)"><span>БЕЛ-<br>ЗУЧ</span></div>
<div class="abs" style="left:61px;top:670px;width:1px;height:26px;background:#ffffaa"></div>
<div class="abs cell one" style="left:62px;top:670px;width:38px;height:26px;background:linear-gradient(to bottom,#ffd1ba 0%,#ff9966 42%,#ff9966 100%)"><span></span></div>
<div class="abs" style="left:100px;top:670px;width:1px;height:26px;background:#ffc6aa"></div>
<div class="abs cell" style="left:24px;top:697px;width:37px;height:26px;background:linear-gradient(to bottom,#ff8cff 0%,#ff00ff 42%,#ff00ff 100%)"><span>ГИ-<br>ЗУЧ</span></div>
<div class="abs" style="left:61px;top:697px;width:1px;height:26px;background:#ff72ff"></div>
<div class="abs cell one" style="left:62px;top:697px;width:38px;height:26px;background:linear-gradient(to bottom,#8ce88c 0%,#00cc00 42%,#00cc00 100%)"><span></span></div>
<div class="abs" style="left:100px;top:697px;width:1px;height:26px;background:#72e272"></div>
<div class="abs cell one" style="left:101px;top:427px;width:38px;height:26px;background:linear-gradient(to bottom,#ffd1ba 0%,#ff9966 42%,#ff9966 100%)"><span></span></div>
<div class="abs" style="left:139px;top:427px;width:1px;height:26px;background:#ffc6aa"></div>
<div class="abs cell one" style="left:140px;top:427px;width:37px;height:26px;background:linear-gradient(to bottom,#8ca3d1 0%,#003399 42%,#003399 100%)"><span></span></div>
<div class="abs" style="left:177px;top:427px;width:1px;height:26px;background:#728ec6"></div>
<div class="abs cell one" style="left:178px;top:427px;width:38px;height:26px;background:linear-gradient(to bottom,#8ce2ff 0%,#00bfff 42%,#00bfff 100%)"><span></span></div>
<div class="abs" style="left:216px;top:427px;width:1px;height:26px;background:#72dbff"></div>
<div class="abs cell one" style="left:217px;top:427px;width:38px;height:26px;background:linear-gradient(to bottom,#a3e8a3 0%,#33cc33 42%,#33cc33 100%)"><span></span></div>
<div class="abs" style="left:255px;top:427px;width:1px;height:26px;background:#8ee28e"></div>
<div class="abs cell" style="left:954px;top:157px;width:38px;height:26px;background:linear-gradient(to bottom,#c5c5c5 0%,#808080 42%,#808080 100%)"><span>БЕЛ-<br>ЗУЧ</span></div>
<div class="abs" style="left:992px;top:157px;width:1px;height:26px;background:#b9b9b9"></div>
<div class="abs cell" style="left:993px;top:157px;width:38px;height:26px;background:linear-gradient(to bottom,#c5c5c5 0%,#808080 42%,#808080 100%)"><span>Мз-<br>ЗУЧ</span></div>
<div class="abs" style="left:1031px;top:157px;width:1px;height:26px;background:#b9b9b9"></div>
<div class="abs cell" style="left:1032px;top:157px;width:37px;height:26px;background:linear-gradient(to bottom,#c5c5c5 0%,#808080 42%,#808080 100%)"><span>ИзИ-<br>ЗУЧ</span></div>
<div class="abs" style="left:1069px;top:157px;width:1px;height:26px;background:#b9b9b9"></div>
<div class="abs cell" style="left:954px;top:184px;width:38px;height:26px;background:linear-gradient(to bottom,#8cffc5 0%,#00ff80 42%,#00ff80 100%)"><span>Мз-<br>ЗУЧ</span></div>
<div class="abs" style="left:992px;top:184px;width:1px;height:26px;background:#72ffb9"></div>
<div class="abs cell" style="left:993px;top:184px;width:38px;height:26px;background:linear-gradient(to bottom,#8cffc5 0%,#00ff80 42%,#00ff80 100%)"><span>БЕЛ-<br>ЗУЧ</span></div>
<div class="abs" style="left:1031px;top:184px;width:1px;height:26px;background:#72ffb9"></div>
<div class="abs cell" style="left:1032px;top:184px;width:37px;height:26px;background:linear-gradient(to bottom,#8cffc5 0%,#00ff80 42%,#00ff80 100%)"><span>Мат-<br>ЗУЧ</span></div>
<div class="abs" style="left:1069px;top:184px;width:1px;height:26px;background:#72ffb9"></div>
<div class="abs cell" style="left:1070px;top:184px;width:38px;height:26px;background:linear-gradient(to bottom,#8cffc5 0%,#00ff80 42%,#00ff80 100%)"><span>БЕЛ-<br>ЗУЧ</span></div>
<div class="abs" style="left:1108px;top:184px;width:1px;height:26px;background:#72ffb9"></div>
<div class="abs cell" style="left:954px;top:211px;width:38px;height:26px;background:linear-gradient(to bottom,#8ca3d1 0%,#003399 42%,#003399 100%)"><span>БЕЛ-<br>ЗУЧ</span></div>
<div class="abs" style="left:992px;top:211px;width:1px;height:26px;background:#728ec6"></div>
<div class="abs cell" style="left:993px;top:211px;width:38px;height:26px;background:linear-gradient(to bottom,#8ca3d1 0%,#003399 42%,#003399 100%)"><span>ИзИ-<br>ЗУЧ</span></div>
<div class="abs" style="left:1031px;top:211px;width:1px;height:26px;background:#728ec6"></div>
<div class="abs cell" style="left:1032px;top:211px;width:37px;height:26px;background:linear-gradient(to bottom,#8ca3d1 0%,#003399 42%,#003399 100%)"><span>ФВС-<br>ЗУЧ</span></div>
<div class="abs" style="left:1069px;top:211px;width:1px;height:26px;background:#728ec6"></div>
<div class="abs cell" style="left:1070px;top:211px;width:38px;height:26px;background:linear-gradient(to bottom,#ffd1ba 0%,#ff9966 42%,#ff9966 100%)"><span>АЕ-<br>ЗУЧ</span></div>
<div class="abs" style="left:1108px;top:211px;width:1px;height:26px;background:#ffc6aa"></div>
<div class="abs cell" style="left:954px;top:238px;width:38px;height:26px;background:linear-gradient(to bottom,#bad18c 0%,#669900 42%,#669900 100%)"><span>БЕЛ-<br>ЗУЧ</span></div>
<div class="abs" style="left:992px;top:238px;width:1px;height:26px;background:#aac672"></div>
<div class="abs cell" style="left:993px;top:238px;width:38px;height:26px;background:linear-gradient(to bottom,#bad18c 0%,#669900 42%,#669900 100%)"><span>Мат-<br>ЗУЧ</span></div>
<div class="abs" style="left:1031px;top:238px;width:1px;height:26px;background:#aac672"></div>
<div class="abs cell" style="left:1032px;top:238px;width:37px;height:26px;background:linear-gradient(to bottom,#bad18c 0%,#669900 42%,#669900 100%)"><span>БЕЛ-<br>ЗУЧ</span></div>
<div class="abs" style="left:1069px;top:238px;width:1px;height:26px;background:#aac672"></div>
<div class="abs cell" style="left:1070px;top:238px;width:38px;height:26px;background:linear-gradient(to bottom,#bad18c 0%,#669900 42%,#669900 100%)"><span>ТП-<br>ЗУЧ</span></div>
<div class="abs" style="left:1108px;top:238px;width:1px;height:26px;background:#aac672"></div>
<div class="abs cell" style="left:954px;top:265px;width:38px;height:26px;background:linear-gradient(to bottom,#a3e8a3 0%,#33cc33 42%,#33cc33 100%)"><span>Мат-<br>ЗУЧ</span></div>
<div class="abs" style="left:992px;top:265px;width:1px;height:26px;background:#8ee28e"></div>
<div class="abs cell" style="left:993px;top:265px;width:38px;height:26px;background:linear-gradient(to bottom,#a3e8a3 0%,#33cc33 42%,#33cc33 100%)"><span>БЕЛ-<br>ЗУЧ</span></div>
<div class="abs" style="left:1031px;top:265px;width:1px;height:26px;background:#8ee28e"></div>
<div class="abs cell" style="left:1032px;top:265px;width:37px;height:26px;background:linear-gradient(to bottom,#a3e8a3 0%,#33cc33 42%,#33cc33 100%)"><span>Мз-<br>ЗУЧ</span></div>
<div class="abs" style="left:1069px;top:265px;width:1px;height:26px;background:#8ee28e"></div>
<div class="abs cell" style="left:1070px;top:265px;width:38px;height:26px;background:linear-gradient(to bottom,#a3e8a3 0%,#33cc33 42%,#33cc33 100%)"><span>ФВС-<br>ЗУЧ</span></div>
<div class="abs" style="left:1108px;top:265px;width:1px;height:26px;background:#8ee28e"></div>
<div class="abs cell" style="left:1109px;top:265px;width:38px;height:26px;background:linear-gradient(to bottom,#ffd1ba 0%,#ff9966 42%,#ff9966 100%)"><span>АЕ-<br>ЗУЧ</span></div>
<div class="abs" style="left:1147px;top:265px;width:1px;height:26px;background:#ffc6aa"></div>
<div class="abs cell one" style="left:1109px;top:292px;width:38px;height:26px;background:linear-gradient(to bottom,#ff8c8c 0%,#ff0000 42%,#ff0000 100%)"><span>ЧКР</span></div>
<div class="abs" style="left:1147px;top:292px;width:1px;height:26px;background:#ff7272"></div>
<div class="abs cell" style="left:1148px;top:292px;width:38px;height:26px;background:linear-gradient(to bottom,#ffd1ba 0%,#ff9966 42%,#ff9966 100%)"><span>АЕ-<br>ЗУЧ</span></div>
<div class="abs" style="left:1186px;top:292px;width:1px;height:26px;background:#ffc6aa"></div>
<div class="abs cell" style="left:1109px;top:319px;width:38px;height:26px;background:linear-gradient(to bottom,#ffdfa3 0%,#ffb833 42%,#ffb833 100%)"><span>БЕЛ-<br>ЗУЧ</span></div>
<div class="abs" style="left:1147px;top:319px;width:1px;height:26px;background:#ffd78e"></div>
<div class="abs cell" style="left:1109px;top:346px;width:38px;height:26px;background:linear-gradient(to bottom,#baffff 0%,#66ffff 42%,#66ffff 100%)"><span>АЕ-<br>ЗУЧ</span></div>
<div class="abs" style="left:1147px;top:346px;width:1px;height:26px;background:#aaffff"></div>
<div class="abs cell" style="left:1109px;top:373px;width:38px;height:26px;background:linear-gradient(to bottom,#d1a3a3 0%,#993333 42%,#993333 100%)"><span>БЕЛ-<br>ЗП</span></div>
<div class="abs" style="left:1147px;top:373px;width:1px;height:26px;background:#c68e8e"></div>
<div class="abs cell" style="left:1109px;top:400px;width:38px;height:26px;background:linear-gradient(to bottom,#ffff8c 0%,#ffff00 42%,#ffff00 100%)"><span>ДБТ-<br>ЗП</span></div>
<div class="abs" style="left:1147px;top:400px;width:1px;height:26px;background:#ffff72"></div>
<div class="abs cell" style="left:1148px;top:400px;width:38px;height:26px;background:linear-gradient(to bottom,#ffff8c 0%,#ffff00 42%,#ffff00 100%)"><span>ИзИ-<br>ЗП</span></div>
<div class="abs" style="left:1186px;top:400px;width:1px;height:26px;background:#ffff72"></div>
<div class="abs cell" style="left:1109px;top:427px;width:38px;height:26px;background:linear-gradient(to bottom,#a3e8a3 0%,#33cc33 42%,#33cc33 100%)"><span>АЕ-<br>ЗУЧ</span></div>
<div class="abs" style="left:1147px;top:427px;width:1px;height:26px;background:#8ee28e"></div>
<div class="abs cell" style="left:1148px;top:427px;width:38px;height:26px;background:linear-gradient(to bottom,#ffc58c 0%,#ff8000 42%,#ff8000 100%)"><span>ИзИ-<br>ЗУЧ</span></div>
<div class="abs" style="left:1186px;top:427px;width:1px;height:26px;background:#ffb972"></div>
<div class="abs cell" style="left:1187px;top:427px;width:37px;height:26px;background:linear-gradient(to bottom,#d1ffba 0%,#99ff66 42%,#99ff66 100%)"><span>ФВС-<br>ЗУЧ</span></div>
<div class="abs" style="left:1224px;top:427px;width:1px;height:26px;background:#c6ffaa"></div>
<div class="abs cell" style="left:1109px;top:454px;width:38px;height:26px;background:linear-gradient(to bottom,#8ce2ff 0%,#00bfff 42%,#00bfff 100%)"><span>БЕЛ-<br>ЗУЧ</span></div>
<div class="abs" style="left:1147px;top:454px;width:1px;height:26px;background:#72dbff"></div>
<div class="abs cell" style="left:1148px;top:454px;width:38px;height:26px;background:linear-gradient(to bottom,#ff8c8c 0%,#ff0000 42%,#ff0000 100%)"><span>Мз-<br>ЗУЧ</span></div>
<div class="abs" style="left:1186px;top:454px;width:1px;height:26px;background:#ff7272"></div>
<div class="abs cell" style="left:1187px;top:454px;width:37px;height:26px;background:linear-gradient(to bottom,#ffc1c1 0%,#ff7777 42%,#ff7777 100%)"><span>ФрЕ-<br>ЗУЧ</span></div>
<div class="abs" style="left:1224px;top:454px;width:1px;height:26px;background:#ffb4b4"></div>
<div class="abs cell" style="left:1109px;top:481px;width:38px;height:26px;background:linear-gradient(to bottom,#e8ffff 0%,#ccffff 42%,#ccffff 100%)"><span>АЕ-<br>ЗУЧ</span></div>
<div class="abs" style="left:1147px;top:481px;width:1px;height:26px;background:#e2ffff"></div>
<div class="abs cell" style="left:1148px;top:481px;width:38px;height:26px;background:linear-gradient(to bottom,#ffc1c1 0%,#ff7777 42%,#ff7777 100%)"><span>ФрЕ-<br>ЗУЧ</span></div>
<div class="abs" style="left:1186px;top:481px;width:1px;height:26px;background:#ffb4b4"></div>
<div class="abs cell" style="left:1109px;top:508px;width:38px;height:26px;background:linear-gradient(to bottom,#e8ffd1 0%,#ccff99 42%,#ccff99 100%)"><span>АЕ-<br>ЗУЧ</span></div>
<div class="abs" style="left:1147px;top:508px;width:1px;height:26px;background:#e2ffc6"></div>
<div class="abs cell" style="left:1148px;top:508px;width:38px;height:26px;background:linear-gradient(to bottom,#d1ffba 0%,#99ff66 42%,#99ff66 100%)"><span>ИзИ-<br>ЗУЧ</span></div>
<div class="abs" style="left:1186px;top:508px;width:1px;height:26px;background:#c6ffaa"></div>
<div class="abs cell" style="left:1109px;top:535px;width:38px;height:26px;background:linear-gradient(to bottom,#ffe8ff 0%,#ffccff 42%,#ffccff 100%)"><span>БЕЛ-<br>ЗУЧ</span></div>
<div class="abs" style="left:1147px;top:535px;width:1px;height:26px;background:#ffe2ff"></div>
<div class="abs cell" style="left:1109px;top:562px;width:38px;height:26px;background:linear-gradient(to bottom,#ff8cff 0%,#ff00ff 42%,#ff00ff 100%)"><span>АЕ-<br>ЗУЧ</span></div>
<div class="abs" style="left:1147px;top:562px;width:1px;height:26px;background:#ff72ff"></div>
<div class="abs cell" style="left:1148px;top:562px;width:38px;height:26px;background:linear-gradient(to bottom,#8cffff 0%,#00ffff 42%,#00ffff 100%)"><span>Мат-<br>ЗУЧ</span></div>
<div class="abs" style="left:1186px;top:562px;width:1px;height:26px;background:#72ffff"></div>
<div class="abs cell one" style="left:1187px;top:562px;width:37px;height:26px;background:linear-gradient(to bottom,#ffffba 0%,#ffff66 42%,#ffff66 100%)"><span>ЧК</span></div>
<div class="abs" style="left:1224px;top:562px;width:1px;height:26px;background:#ffffaa"></div>
<div class="abs cell" style="left:1109px;top:589px;width:38px;height:26px;background:linear-gradient(to bottom,#ffc1c1 0%,#ff7777 42%,#ff7777 100%)"><span>БЕЛ-<br>ЗУЧ</span></div>
<div class="abs" style="left:1147px;top:589px;width:1px;height:26px;background:#ffb4b4"></div>
<div class="abs cell one" style="left:1148px;top:589px;width:38px;height:26px;background:linear-gradient(to bottom,#e8ffff 0%,#ccffff 42%,#ccffff 100%)"><span>Т- ЗУЧ</span></div>
<div class="abs" style="left:1186px;top:589px;width:1px;height:26px;background:#e2ffff"></div>
<div class="abs cell" style="left:1109px;top:616px;width:38px;height:26px;background:linear-gradient(to bottom,#c5c58c 0%,#808000 42%,#808000 100%)"><span>АЕ-<br>ЗУЧ</span></div>
<div class="abs" style="left:1147px;top:616px;width:1px;height:26px;background:#b9b972"></div>
<div class="abs cell" style="left:1148px;top:616px;width:38px;height:26px;background:linear-gradient(to bottom,#8ce88c 0%,#00cc00 42%,#00cc00 100%)"><span>АЕ-<br>ЗУЧ</span></div>
<div class="abs" style="left:1186px;top:616px;width:1px;height:26px;background:#72e272"></div>
<div class="abs cell" style="left:1187px;top:616px;width:37px;height:26px;background:linear-gradient(to bottom,#c5c58c 0%,#808000 42%,#808000 100%)"><span>Хим-<br>ЗУЧ</span></div>
<div class="abs" style="left:1224px;top:616px;width:1px;height:26px;background:#b9b972"></div>
<div class="abs cell" style="left:1109px;top:643px;width:38px;height:26px;background:linear-gradient(to bottom,#8cffff 0%,#00ffff 42%,#00ffff 100%)"><span>Мат-<br>ЗУЧ</span></div>
<div class="abs" style="left:1147px;top:643px;width:1px;height:26px;background:#72ffff"></div>
<div class="abs cell" style="left:1148px;top:643px;width:38px;height:26px;background:linear-gradient(to bottom,#ffe8e8 0%,#ffcccc 42%,#ffcccc 100%)"><span>ИТ-<br>ЗУЧ</span></div>
<div class="abs" style="left:1186px;top:643px;width:1px;height:26px;background:#ffe2e2"></div>
<div class="abs cell" style="left:1187px;top:643px;width:37px;height:26px;background:linear-gradient(to bottom,#ba8cff 0%,#6600ff 42%,#6600ff 100%)"><span>АЕ-<br>ЗУЧ</span></div>
<div class="abs" style="left:1224px;top:643px;width:1px;height:26px;background:#aa72ff"></div>
<div class="abs cell" style="left:1109px;top:670px;width:38px;height:26px;background:linear-gradient(to bottom,#8cff8c 0%,#00ff00 42%,#00ff00 100%)"><span>АЕ-<br>ЗУЧ</span></div>
<div class="abs" style="left:1147px;top:670px;width:1px;height:26px;background:#72ff72"></div>
<div class="abs cell" style="left:1148px;top:670px;width:38px;height:26px;background:linear-gradient(to bottom,#d1ffba 0%,#99ff66 42%,#99ff66 100%)"><span>ФВС-<br>ЗУЧ</span></div>
<div class="abs" style="left:1186px;top:670px;width:1px;height:26px;background:#c6ffaa"></div>
<div class="abs cell" style="left:1187px;top:670px;width:37px;height:26px;background:linear-gradient(to bottom,#ffdc8c 0%,#ffb300 42%,#ffb300 100%)"><span>АЕ-<br>ЗУЧ</span></div>
<div class="abs" style="left:1224px;top:670px;width:1px;height:26px;background:#ffd572"></div>
<div class="abs cell" style="left:1225px;top:670px;width:38px;height:26px;background:linear-gradient(to bottom,#ffdc8c 0%,#ffb300 42%,#ffb300 100%)"><span>АЕ-<br>ЗУЧ</span></div>
<div class="abs" style="left:1263px;top:670px;width:1px;height:26px;background:#ffd572"></div>
<div class="abs cell" style="left:1109px;top:697px;width:38px;height:26px;background:linear-gradient(to bottom,#ffffba 0%,#ffff66 42%,#ffff66 100%)"><span>БЕЛ-<br>ЗУЧ</span></div>
<div class="abs" style="left:1147px;top:697px;width:1px;height:26px;background:#ffffaa"></div>
<div class="abs cell" style="left:1148px;top:697px;width:38px;height:26px;background:linear-gradient(to bottom,#ff8cff 0%,#ff00ff 42%,#ff00ff 100%)"><span>ГИ-<br>ЗУЧ</span></div>
<div class="abs" style="left:1186px;top:697px;width:1px;height:26px;background:#ff72ff"></div>
<div class="abs cell one" style="left:1187px;top:697px;width:37px;height:26px;background:linear-gradient(to bottom,#e8ffd1 0%,#ccff99 42%,#ccff99 100%)"><span>ЧК</span></div>
<div class="abs" style="left:1224px;top:697px;width:1px;height:26px;background:#e2ffc6"></div>
<div class="abs cell" style="left:1225px;top:697px;width:38px;height:26px;background:linear-gradient(to bottom,#8cd1a3 0%,#009933 42%,#009933 100%)"><span>АЕ-<br>ЗУЧ</span></div>
<div class="abs" style="left:1263px;top:697px;width:1px;height:26px;background:#72c68e"></div>
<div class="abs" style="left:0;top:156px;width:1263px;height:1px;background:#000"></div>
<div class="abs" style="left:0;top:183px;width:1263px;height:1px;background:#000"></div>
<div class="abs" style="left:0;top:210px;width:1263px;height:1px;background:#000"></div>
<div class="abs" style="left:0;top:237px;width:1263px;height:1px;background:#000"></div>
<div class="abs" style="left:0;top:264px;width:1263px;height:1px;background:#000"></div>
<div class="abs" style="left:0;top:291px;width:1263px;height:1px;background:#000"></div>
<div class="abs" style="left:0;top:318px;width:1263px;height:1px;background:#000"></div>
<div class="abs" style="left:0;top:345px;width:1263px;height:1px;background:#000"></div>
<div class="abs" style="left:0;top:372px;width:1263px;height:1px;background:#000"></div>
<div class="abs" style="left:0;top:399px;width:1263px;height:1px;background:#000"></div>
<div class="abs" style="left:0;top:426px;width:1263px;height:1px;background:#000"></div>
<div class="abs" style="left:0;top:453px;width:1263px;height:1px;background:#000"></div>
<div class="abs" style="left:0;top:480px;width:1263px;height:1px;background:#000"></div>
<div class="abs" style="left:0;top:507px;width:1263px;height:1px;background:#000"></div>
<div class="abs" style="left:0;top:534px;width:1263px;height:1px;background:#000"></div>
<div class="abs" style="left:0;top:561px;width:1263px;height:1px;background:#000"></div>
<div class="abs" style="left:0;top:588px;width:1263px;height:1px;background:#000"></div>
<div class="abs" style="left:0;top:615px;width:1263px;height:1px;background:#000"></div>
<div class="abs" style="left:0;top:642px;width:1263px;height:1px;background:#000"></div>
<div class="abs" style="left:0;top:669px;width:1263px;height:1px;background:#000"></div>
<div class="abs" style="left:0;top:696px;width:1263px;height:1px;background:#000"></div>
<div class="abs" style="left:0;top:723px;width:1263px;height:1px;background:#000"></div>
<div class="abs rowl" style="left:0;top:157px;width:23px;height:26px;line-height:29px"><span class="fit" style="display: inline-block; white-space: nowrap; letter-spacing: -0.27px;">1 а</span></div>
<div class="abs rowl" style="left:0;top:184px;width:23px;height:26px;line-height:29px"><span class="fit" style="display: inline-block; white-space: nowrap; letter-spacing: -0.33px;">1 б</span></div>
<div class="abs rowl" style="left:0;top:211px;width:23px;height:26px;line-height:29px"><span class="fit" style="display: inline-block; white-space: nowrap; letter-spacing: -0.27px;">2 а</span></div>
<div class="abs rowl" style="left:0;top:238px;width:23px;height:26px;line-height:29px"><span class="fit" style="display: inline-block; white-space: nowrap; letter-spacing: -0.33px;">2 б</span></div>
<div class="abs rowl" style="left:0;top:265px;width:23px;height:26px;line-height:29px"><span class="fit" style="display: inline-block; white-space: nowrap; letter-spacing: -0.18px;">2 в</span></div>
<div class="abs rowl" style="left:0;top:292px;width:23px;height:26px;line-height:29px"><span class="fit" style="display: inline-block; white-space: nowrap; letter-spacing: -0.27px;">3 а</span></div>
<div class="abs rowl" style="left:0;top:319px;width:23px;height:26px;line-height:29px"><span class="fit" style="display: inline-block; white-space: nowrap; letter-spacing: -0.33px;">3 б</span></div>
<div class="abs rowl" style="left:0;top:346px;width:23px;height:26px;line-height:29px"><span class="fit" style="display: inline-block; white-space: nowrap; letter-spacing: -0.18px;">3 в</span></div>
<div class="abs rowl" style="left:0;top:373px;width:23px;height:26px;line-height:29px"><span class="fit" style="display: inline-block; white-space: nowrap; letter-spacing: -0.27px;">4 а</span></div>
<div class="abs rowl" style="left:0;top:400px;width:23px;height:26px;line-height:29px"><span class="fit" style="display: inline-block; white-space: nowrap; letter-spacing: -0.33px;">4 б</span></div>
<div class="abs rowl" style="left:0;top:427px;width:23px;height:26px;line-height:29px"><span class="fit" style="display: inline-block; white-space: nowrap; letter-spacing: -0.27px;">5 а</span></div>
<div class="abs rowl" style="left:0;top:454px;width:23px;height:26px;line-height:29px"><span class="fit" style="display: inline-block; white-space: nowrap; letter-spacing: -0.33px;">5 б</span></div>
<div class="abs rowl" style="left:0;top:481px;width:23px;height:26px;line-height:29px"><span class="fit" style="display: inline-block; white-space: nowrap; letter-spacing: -0.18px;">5 в</span></div>
<div class="abs rowl" style="left:0;top:508px;width:23px;height:26px;line-height:29px"><span class="fit" style="display: inline-block; white-space: nowrap; letter-spacing: -0.27px;">6 а</span></div>
<div class="abs rowl" style="left:0;top:535px;width:23px;height:26px;line-height:29px"><span class="fit" style="display: inline-block; white-space: nowrap; letter-spacing: -0.33px;">6 б</span></div>
<div class="abs rowl" style="left:0;top:562px;width:23px;height:26px;line-height:29px"><span class="fit" style="display: inline-block; white-space: nowrap; letter-spacing: -0.18px;">6 в</span></div>
<div class="abs rowl" style="left:0;top:589px;width:23px;height:26px;line-height:29px"><span class="fit" style="display: inline-block; white-space: nowrap; letter-spacing: -0.27px;">7 а</span></div>
<div class="abs rowl" style="left:0;top:616px;width:23px;height:26px;line-height:29px"><span class="fit" style="display: inline-block; white-space: nowrap; letter-spacing: -0.33px;">7 б</span></div>
<div class="abs rowl" style="left:0;top:643px;width:23px;height:26px;line-height:29px"><span class="fit" style="display: inline-block; white-space: nowrap; letter-spacing: -0.27px;">8 а</span></div>
<div class="abs rowl" style="left:0;top:670px;width:23px;height:26px;line-height:29px"><span class="fit" style="display: inline-block; white-space: nowrap; letter-spacing: -0.33px;">8 б</span></div>
<div class="abs rowl" style="left:0;top:697px;width:23px;height:26px;line-height:29px"><span class="fit" style="display: inline-block; white-space: nowrap; letter-spacing: -0.27px;">9 а</span></div>
<div class="abs" style="left:23px;top:129px;width:1px;height:595px;background:#8a8a90"></div>
</div></div>
<div class="abs" style="left:0;top:719px;width:1263px;height:6px;background:linear-gradient(to bottom,#f4f4f4,#e4e4e6)"></div>
<div class="abs" style="left:0;top:725px;width:400px;height:110px;background:#78798f"></div>
<div class="abs" style="left:400px;top:725px;width:863px;height:112px;background:#cdcdd1"></div>
<div class="abs" style="left:0;top:835px;width:400px;height:2px;background:#fdfdfd"></div>
<div class="abs" style="left:0;top:837px;width:1263px;height:1px;background:#66728e"></div>
<div class="abs" style="left:0;top:838px;width:1263px;height:17px;background:#f0eeee"></div>
<div class="abs sb" style="left:-1.5px;top:843px;font-size:10.5px;line-height:13px;color:#0a0a20"><span style="display: inline-block; white-space: nowrap; letter-spacing: -0.37px;">Ready</span></div>
<!-- Teachers dialog -->
<div class="abs dlg" style="left:242px;top:127px;width:713px;height:360px;"></div>
<div class="abs" style="left:243px;top:128px;width:711px;height:30px;background:#fff"></div>
<div class="abs wt" style="left:251px;top:136px;"><span style="letter-spacing: 0.01px;">Учители</span></div>
<div class="abs" style="left:835px;top:142px;width:10px;height:1px;background:#777"></div>
<div class="abs" style="left:880px;top:137px;width:10px;height:10px;border:1px solid #777;box-sizing:border-box"></div>
<svg class="abs" style="left:925px;top:136px" width="12" height="12"><path d="M1 1L11 11M11 1L1 11" stroke="#777" stroke-width="1" fill="none"></path></svg>
<svg class="abs" style="left:274px;top:197.500px" width="40" height="46" viewBox="0 0 40 46">
<rect x="1.500" y="1.500" width="37" height="43" rx="2" fill="#86b0ee" stroke="#6f97d8" stroke-width="1.200"></rect>
<rect x="1.500" y="1.500" width="6" height="43" fill="#5f86c8"></rect>
<rect x="13" y="11" width="18" height="10" fill="#fff"></rect><path d="M15.500 14.500h13M15.500 17.500h13" stroke="#cfdcf2" stroke-width="1.400"></path></svg>
<svg class="abs" style="left:268px;top:261px" width="52" height="52" viewBox="0 0 52 52">
<path d="M2 38c0-8 6-11.500 13-11.500s13 3.500 13 11.500z" fill="#f29a9a" stroke="#d03a44" stroke-width="1.300"></path>
<path d="M6.500 19c-1-10 4-16 10-16s10 6 9 17l-3 10h-13z" fill="#b87a50" stroke="#8a5a38" stroke-width="0.800"></path>
<ellipse cx="16" cy="20" rx="6" ry="8" fill="#f2c08e"></ellipse>
<path d="M13 49.500c0-9 8-13.500 18.500-13.500s18.500 4.500 18.500 13.500z" fill="#bfe3c4" stroke="#3e9a50" stroke-width="1.400"></path>
<path d="M27 32h9v5.500c-1.500 1.800-7.500 1.800-9 0z" fill="#fbd99a" stroke="#c89a4a" stroke-width="0.800"></path>
<path d="M19.500 22c-1.500-11 4-17 12-17s13.500 6 12 17c0 4-1.500 7-3 9h-18c-1.500-2-3-5-3-9z" fill="#f0cc80" stroke="#c09040" stroke-width="0.900"></path>
<ellipse cx="31.500" cy="24" rx="7.500" ry="9.500" fill="#fcdc9c" stroke="#c89a4a" stroke-width="0.900"></ellipse>
</svg>
<svg class="abs" style="left:277px;top:327px" width="36" height="50" viewBox="0 0 28 32" preserveAspectRatio="none">
<rect x="8" y="3" width="18" height="26" fill="#eab88e" stroke="#c98f66" stroke-width="0.8"></rect>
<rect x="11" y="5.500" width="13" height="23.500" fill="#5a4347"></rect>
<rect x="18" y="5.500" width="6" height="23.500" fill="#7a5f62"></rect>
<path d="M0.800 4.500l12.200-3.500v30l-12.200-3z" fill="#ffc09a" stroke="#d98f66" stroke-width="0.8"></path>
<circle cx="10" cy="17" r="0.7" fill="#9a5a3a"></circle></svg>
<svg class="abs" style="left:270px;top:396px" width="50" height="40" viewBox="0 0 50 40">
<path d="M25 2l22 14-22 14-22-14z" fill="#3c4048"></path>
<path d="M2 14h28v-8l18 14-18 14v-8h-28z" fill="#58d058" stroke="#1f8a2a" stroke-width="2"></path>
<path d="M6 20h24" stroke="#c8f4c8" stroke-width="2.400"></path></svg>
<div class="abs dt" style="left:349px;top:172px;"><span style="letter-spacing: 0.12px;">Въведи учители :</span></div>
<div class="abs" style="left:337px;top:187px;width:448px;height:280px;background:#fff;border:1px solid #828790;box-sizing:border-box"></div>
<div class="abs" style="left:338px;top:188px;width:430px;height:22px;background:#f0f0f0;border-top:1px solid #fff;border-bottom:1px solid #dedede;box-sizing:border-box"></div>
<div class="abs" style="left:498px;top:189px;width:1px;height:20px;background:#d0d0d0"></div><div class="abs" style="left:499px;top:189px;width:1px;height:20px;background:#fff"></div>
<div class="abs" style="left:548px;top:189px;width:1px;height:20px;background:#d0d0d0"></div><div class="abs" style="left:549px;top:189px;width:1px;height:20px;background:#fff"></div>
<div class="abs" style="left:598px;top:189px;width:1px;height:20px;background:#d0d0d0"></div><div class="abs" style="left:599px;top:189px;width:1px;height:20px;background:#fff"></div>
<div class="abs" style="left:658px;top:189px;width:1px;height:20px;background:#d0d0d0"></div><div class="abs" style="left:659px;top:189px;width:1px;height:20px;background:#fff"></div>
<div class="abs" style="left:758px;top:189px;width:1px;height:20px;background:#d0d0d0"></div><div class="abs" style="left:759px;top:189px;width:1px;height:20px;background:#fff"></div>
<div class="abs dt" style="left:344px;top:195px;"><span style="letter-spacing: -0.53px;">Име</span></div>
<div class="abs dt" style="left:504px;top:195px;"><span style="letter-spacing: 0.42px;">Кратко</span></div>
<div class="abs dt" style="left:567px;top:195px;"><span style="letter-spacing: 0.1px;">Брой</span></div>
<div class="abs dt" style="left:604.5px;top:195px;"><span style="letter-spacing: -0.05px;">Условия</span></div>
<div class="abs dt" style="left:664.5px;top:195px;"><span style="letter-spacing: 0.03px;">Класен ръково…</span></div>
<div class="abs dt" style="left:763px;top:195px;width:4px;overflow:hidden"><span style="letter-spacing: -1.95px;">С</span></div>
<div class="abs" style="left:343px;top:212px;width:423px;height:22px;background:#0078d7"></div>
<div class="abs" style="left:342px;top:255px;width:424px;height:21px;background:#f5f5f5"></div>
<svg class="abs" style="left:342px;top:215px" width="18" height="16" viewBox="0 0 34 30">
<path d="M8 15v8c2 3.5 5.5 4.500 9.500 4.500s7.500-1 9.500-4.500v-8z" fill="#4a4f58"></path>
<path d="M17 1.500l15.500 9.500-15.500 9.500-15.500-9.500z" fill="#3c4048" stroke="#2c3038" stroke-width="0.8"></path>
<path d="M17 11l-11 1.800v11" fill="none" stroke="#f0a020" stroke-width="2"></path>
<rect x="4.800" y="21" width="2.600" height="6" fill="#f0a020"></rect></svg>
<div class="abs" style="left:360px;top:214px;width:17px;height:18px;background:#ff0000;border:1px solid #fff;box-sizing:border-box;"></div>
<div class="abs dt" style="left:378.5px;top:218px;color:#fff"><span style="letter-spacing: -0.1px;">Тестов Красимиров</span></div>
<div class="abs dt" style="left:504px;top:218px;color:#fff"><span style="letter-spacing: 0.65px;">Т....</span></div>
<div class="abs dt" style="left:581px;top:218px;color:#fff"><span style="letter-spacing: -0.12px;">28</span></div>
<div class="abs" style="left:599px;top:213px;width:57px;height:19px;background:#000"></div>
<div class="abs" style="left:600px;top:214px;width:55px;height:2px;background:#fff"></div>
<div class="abs" style="left:600px;top:217px;width:55px;height:14px;background:repeating-linear-gradient(to right,rgba(0,0,0,0) 0,rgba(0,0,0,0) 6px,#000 6px,#000 7px),repeating-linear-gradient(to bottom,#00ee00 0,#00ee00 2px,#000 2px,#000 3px)"></div>
<svg class="abs" style="left:342px;top:236px" width="18" height="16" viewBox="0 0 34 30">
<path d="M8 15v8c2 3.5 5.5 4.500 9.500 4.500s7.500-1 9.500-4.500v-8z" fill="#4a4f58"></path>
<path d="M17 1.500l15.500 9.500-15.500 9.500-15.500-9.500z" fill="#3c4048" stroke="#2c3038" stroke-width="0.8"></path>
<path d="M17 11l-11 1.800v11" fill="none" stroke="#f0a020" stroke-width="2"></path>
<rect x="4.800" y="21" width="2.600" height="6" fill="#f0a020"></rect></svg>
<div class="abs" style="left:360px;top:235px;width:17px;height:18px;background:#00ff00;"></div>
<div class="abs dt" style="left:378.5px;top:239px;color:#000"><span style="letter-spacing: 0.03px;">Тестов Димитрова</span></div>
<div class="abs dt" style="left:504px;top:239px;color:#000"><span style="letter-spacing: 0.65px;">Т....</span></div>
<div class="abs dt" style="left:581px;top:239px;color:#000"><span style="letter-spacing: -0.12px;">26</span></div>
<div class="abs dt" style="left:664.5px;top:239px;"><span style="letter-spacing: -0.83px;">7 б</span></div>
<div class="abs" style="left:599px;top:237px;width:57px;height:16px;background:#000"></div>
<div class="abs" style="left:600px;top:238px;width:55px;height:14px;background:repeating-linear-gradient(to right,rgba(0,0,0,0) 0,rgba(0,0,0,0) 6px,#000 6px,#000 7px),repeating-linear-gradient(to bottom,#00ee00 0,#00ee00 2px,#000 2px,#000 3px)"></div>
<svg class="abs" style="left:342px;top:257px" width="18" height="16" viewBox="0 0 34 30">
<path d="M8 15v8c2 3.5 5.5 4.500 9.500 4.500s7.500-1 9.500-4.500v-8z" fill="#4a4f58"></path>
<path d="M17 1.500l15.500 9.500-15.500 9.500-15.500-9.500z" fill="#3c4048" stroke="#2c3038" stroke-width="0.8"></path>
<path d="M17 11l-11 1.800v11" fill="none" stroke="#f0a020" stroke-width="2"></path>
<rect x="4.800" y="21" width="2.600" height="6" fill="#f0a020"></rect></svg>
<div class="abs" style="left:360px;top:256px;width:17px;height:18px;background:#0000ff;"></div>
<div class="abs dt" style="left:378.5px;top:260px;color:#000"><span style="letter-spacing: 0.06px;">Тестов Божкова</span></div>
<div class="abs dt" style="left:504px;top:260px;color:#000"><span style="letter-spacing: 0.65px;">Т....</span></div>
<div class="abs dt" style="left:581px;top:260px;color:#000"><span style="letter-spacing: -0.12px;">24</span></div>
<div class="abs" style="left:599px;top:255px;width:57px;height:19px;background:#000"></div>
<div class="abs" style="left:600px;top:256px;width:55px;height:2px;background:#fff"></div>
<div class="abs" style="left:600px;top:259px;width:55px;height:14px;background:repeating-linear-gradient(to right,rgba(0,0,0,0) 0,rgba(0,0,0,0) 6px,#000 6px,#000 7px),repeating-linear-gradient(to bottom,#00ee00 0,#00ee00 2px,#000 2px,#000 3px)"></div>
<div class="abs" style="left:599px;top:276px;width:57px;height:19px;background:#000"></div>
<div class="abs" style="left:600px;top:277px;width:55px;height:2px;background:#fff"></div>
<div class="abs" style="left:600px;top:280px;width:55px;height:14px;background:repeating-linear-gradient(to right,rgba(0,0,0,0) 0,rgba(0,0,0,0) 6px,#000 6px,#000 7px),repeating-linear-gradient(to bottom,#00ee00 0,#00ee00 2px,#000 2px,#000 3px)"></div>
<div class="abs" style="left:768px;top:188px;width:16px;height:118px;background:#f0f0f0"></div>
<div class="abs" style="left:768px;top:206px;width:16px;height:100px;background:#cdcdcd"></div>
<svg class="abs" style="left:771px;top:192px" width="10" height="8"><path d="M1 6.500l4-4.500 4 4.500" fill="none" stroke="#505050" stroke-width="1.600"></path></svg>
<div class="abs btn " style="left:801px;top:188px;width:132px;height:26px;line-height:24px;"><span class="fit"></span></div>
<div class="abs btn " style="left:801px;top:224px;width:132px;height:27px;line-height:25px;"><span class="fit"></span></div>
<div class="abs btn " style="left:801px;top:259px;width:132px;height:27px;line-height:25px;"><span class="fit"></span></div>
<div class="abs dt" style="left:833px;top:196px;"><span style="letter-spacing: -0.3px;">Нов</span></div>
<div class="abs dt" style="left:833px;top:231.5px;"><span style="letter-spacing: 0.12px;">Редактирай</span></div>
<div class="abs dt" style="left:833px;top:267px;"><span style="letter-spacing: -0.32px;">Премахни</span></div>
<svg class="abs" style="left:809px;top:192px" width="18" height="18" viewBox="0 0 18 18"><circle cx="9" cy="9" r="7.800" fill="#46c24a" stroke="#6fd070" stroke-width="1" stroke-dasharray="1.500 1"></circle><path d="M9 5v8M5 9h8" stroke="#fff" stroke-width="2.600"></path></svg>
<svg class="abs" style="left:809px;top:230px" width="18" height="16" viewBox="0 0 34 30">
<path d="M8 15v8c2 3.5 5.5 4.500 9.500 4.500s7.500-1 9.500-4.500v-8z" fill="#4a4f58"></path>
<path d="M17 1.500l15.500 9.500-15.500 9.500-15.500-9.500z" fill="#3c4048" stroke="#2c3038" stroke-width="0.8"></path>
<path d="M17 11l-11 1.800v11" fill="none" stroke="#f0a020" stroke-width="2"></path>
<rect x="4.800" y="21" width="2.600" height="6" fill="#f0a020"></rect></svg>
<svg class="abs" style="left:809px;top:263px" width="18" height="18" viewBox="0 0 18 18"><circle cx="9" cy="9" r="8" fill="#ec4444"></circle><rect x="3.500" y="7.200" width="11" height="3.600" rx="0.800" fill="#fff"></rect></svg>
<!-- Teacher dialog -->
<div class="abs dlg" style="left:343px;top:278px;width:791px;height:518px;border-right-color:#e8e8e8"></div>
<div class="abs" style="left:344px;top:279px;width:789px;height:25px;background:#fff"></div>
<div class="abs wt" style="left:346.5px;top:284px;"><span style="letter-spacing: -0.04px;">Учител</span></div>
<svg class="abs" style="left:1112px;top:285px" width="12" height="12"><path d="M1 1L11 11M11 1L1 11" stroke="#777" stroke-width="1" fill="none"></path></svg>
<div class="abs dt" style="left:366.5px;top:341px;"><span style="letter-spacing: -0.14px;">Име :</span></div>
<div class="abs inp" style="left:485px;top:336px;width:230px;height:19px;line-height:17px;"><span class="fit" style="letter-spacing: -0.01px;">Тестов Красимиров</span></div>
<div class="abs btn " style="left:720px;top:336px;width:19px;height:18px;line-height:16px;font-size:14px;line-height:15px"><span class="fit">+</span></div>
<div class="abs dt" style="left:366.5px;top:372.5px;"><span style="letter-spacing: -0.03px;">Съкращение:</span></div>
<div class="abs inp" style="left:485px;top:369px;width:90px;height:20px;line-height:18px;"><span class="fit" style="letter-spacing: -0.01px;">Т.Красимиров</span></div>
<div class="abs" style="left:584px;top:372px;width:13px;height:13px;background:#fff;border:1px solid #333;box-sizing:border-box"></div>
<div class="abs dt" style="left:600px;top:372.5px;"><span style="letter-spacing: -0.14px;">Мъж</span></div>
<div class="abs dt" style="left:366.5px;top:404px;"><span style="letter-spacing: -0.02px;">Норматив на учител</span></div>
<div class="abs inp" style="left:485px;top:400px;width:90px;height:20px;line-height:18px;"></div>
<div class="abs dt" style="left:582.5px;top:404px;"><span style="letter-spacing: -0.06px;">(по избор)</span></div>
<div class="abs dt" style="left:775.5px;top:328px;"><span style="letter-spacing: -0.09px;">Електронна</span></div>
<div class="abs dt" style="left:775.5px;top:341px;height:8.700px;overflow:hidden"><span style="letter-spacing: 0.02px;">поща :</span></div>
<div class="abs dt" style="left:775.5px;top:350.5px;"><span style="letter-spacing: -0.19px;">Телефон :</span></div>
<div class="abs inp" style="left:859px;top:324px;width:188px;height:20px;line-height:18px;"></div>
<div class="abs inp" style="left:859px;top:346px;width:188px;height:20px;line-height:18px;"></div>
<div class="abs dt" style="left:775.5px;top:419px;"><span style="letter-spacing: -0.4px;">Номер:</span></div>
<div class="abs inp" style="left:859px;top:415px;width:138px;height:20px;line-height:18px;"></div>
<div class="abs grp" style="left:600px;top:470px;width:523px;height:62px"></div>
<div class="abs" style="left:790px;top:464px;width:60px;height:13px;background:#f0f0f0"></div>
<div class="abs dt" style="left:783.5px;top:464px;"><span style="letter-spacing: 0.05px;">Класни стаи</span></div>
<div class="abs btn " style="left:809px;top:494px;width:273px;height:24px;line-height:22px;"><span class="fit" style="letter-spacing: 0.05px;">Класни стаи</span></div>
<div class="abs grp" style="left:600px;top:548px;width:523px;height:96px"></div>
<div class="abs btn " style="left:810px;top:576px;width:271px;height:20px;line-height:18px;"><span class="fit" style="letter-spacing: -0.11px;">Персонализирани полета</span></div>
<div class="abs btn " style="left:700px;top:758px;width:119px;height:20px;line-height:18px;"><span class="fit"></span></div>
<!-- Custom fields dialog -->
<div class="abs dlg" style="left:66px;top:429px;width:739px;height:418px;"></div>
<div class="abs" style="left:67px;top:430px;width:737px;height:24px;background:#fff"></div>
<div class="abs wt" style="left:70.5px;top:434px;"><span style="letter-spacing: -0.06px;">Персонализирани полета</span></div>
<svg class="abs" style="left:782.5px;top:435px" width="12" height="12"><path d="M1 1L11 11M11 1L1 11" stroke="#777" stroke-width="1" fill="none"></path></svg>
<svg class="abs" style="left:80px;top:467px" width="50" height="50" viewBox="0 0 50 50">
<rect x="1.700" y="1.500" width="42.600" height="41" fill="#fdfdff" stroke="#b4bfce" stroke-width="1.400"></rect>
<rect x="1" y="0.800" width="44" height="7" fill="#7b8b9d"></rect>
<g stroke="#8fb6ee" stroke-width="1.100"><path d="M14.500 17h21M14.500 21.800h21M14.500 26.600h21M14.500 31.400h16"></path></g>
<g fill="#8fb6ee"><rect x="9.500" y="16.300" width="1.200" height="1.400"></rect><rect x="9.500" y="21.100" width="1.200" height="1.400"></rect><rect x="9.500" y="25.900" width="1.200" height="1.400"></rect><rect x="9.500" y="30.700" width="1.200" height="1.400"></rect></g>
<g transform="translate(25.400 45.600) rotate(-45)">
<path d="M0 0L5.500 -2.700L5.500 2.700Z" fill="#f3dcae" stroke="#a88a4a" stroke-width="0.600"></path>
<path d="M0 0L2.200 -1.100L2.200 1.100Z" fill="#3a3a3a"></path>
<rect x="5.500" y="-2.700" width="14.500" height="5.400" fill="#f6d47a" stroke="#b8963e" stroke-width="0.700"></rect>
<rect x="20" y="-2.700" width="3.200" height="5.400" fill="#c4ccd6" stroke="#8e98a6" stroke-width="0.600"></rect>
<path d="M23.200 -2.700h2.300a2.700 2.700 0 0 1 0 5.400h-2.300z" fill="#ee6b72" stroke="#c24a52" stroke-width="0.600"></path>
</g></svg>
<div class="abs hd" style="left:131px;top:479.5px;"><span style="letter-spacing: 0.34px;">(Т.Красимиров) Тестов Красимиров</span></div>
<div class="abs" style="left:78px;top:516px;width:569px;height:210px;background:#fff;border:1px solid #828790;box-sizing:border-box"></div>
<div class="abs" style="left:79px;top:517px;width:551px;height:25px;background:#f0f0f0;border-top:1px solid #fff;border-right:1px solid #a0a0a0;border-bottom:1px solid #a0a0a0;box-sizing:border-box"></div>
<div class="abs" style="left:329px;top:518px;width:1px;height:23px;background:#a0a0a0"></div><div class="abs" style="left:330px;top:518px;width:1px;height:23px;background:#fff"></div>
<div class="abs" style="left:79px;top:542px;width:551px;height:18px;background:#f5f5f5"></div>
<div class="abs dt" style="left:85.5px;top:524px;"><span style="letter-spacing: -0.53px;">Име</span></div>
<div class="abs dt" style="left:335.5px;top:524px;"><span style="letter-spacing: -0.11px;">Стойност</span></div>
<div class="abs btn " style="left:659px;top:518px;width:133px;height:22px;line-height:20px;"><span class="fit" style="letter-spacing: -0.06px;">Добави</span></div>
<div class="abs btn " style="left:659px;top:553px;width:133px;height:20px;line-height:18px;"><span class="fit" style="letter-spacing: -0.23px;">Преименувай</span></div>
<div class="abs btn " style="left:659px;top:631.5px;width:133px;height:20px;line-height:18px;"><span class="fit" style="letter-spacing: 0.03px;">Задайте още</span></div>
<div class="abs btn " style="left:659px;top:691.5px;width:133px;height:20px;line-height:18px;"><span class="fit" style="letter-spacing: -0.32px;">Премахни</span></div>
<div class="abs btn dis" style="left:659px;top:780px;width:61px;height:21px;line-height:19px;"><span class="fit" style="letter-spacing: 1.07px;">&lt;&lt;</span></div>
<div class="abs btn " style="left:731px;top:780px;width:61px;height:21px;line-height:19px;"><span class="fit" style="letter-spacing: 1.07px;">&gt;&gt;</span></div>
<div class="abs btn " style="left:661px;top:813px;width:132px;height:21px;line-height:19px;"><span class="fit" style="letter-spacing: -0.1px;">Затвори</span></div>
<!-- input dialog -->
<div class="abs dlg2" style="left:81px;top:546px;width:383px;height:181px;"></div>
<div class="abs" style="left:82px;top:547px;width:381px;height:25px;background:#fff"></div>
<div class="abs wt2" style="left:85px;top:551.5px;"><span style="letter-spacing: -0.26px;">aSc Разписание на часовете</span></div>
<svg class="abs" style="left:442px;top:552.5px" width="12" height="12"><path d="M1 1L11 11M11 1L1 11" stroke="#000" stroke-width="1.2" fill="none"></path></svg>
<div class="abs dt" style="left:129.5px;top:583.5px;"><span style="letter-spacing: -0.09px;">Моля, въведете името на НОВО персонализирано поле:</span></div>
<div class="abs inp" style="left:160px;top:644px;width:228px;height:20px;line-height:18px;border:1px solid #0078d7;"><span class="fit" style="letter-spacing: 0.02px;">Длъжност</span></div>
<div class="abs btn def" style="left:188px;top:693px;width:73px;height:21px;line-height:19px;"><span class="fit" style="letter-spacing: -0.95px;">OK</span></div>
<div class="abs btn " style="left:284px;top:693px;width:73px;height:21px;line-height:19px;"><span class="fit" style="letter-spacing: 0.29px;">Откажи</span></div>
<div class="abs" style="left:543px;top:45px;width:63px;height:79px;border:3px solid #e81123;box-sizing:border-box"></div>
<div class="abs" style="left:333px;top:209px;width:437px;height:28px;border:3px solid #e81123;box-sizing:border-box"></div>
<div class="abs" style="left:796px;top:215px;width:142px;height:42px;border:3px solid #e81123;box-sizing:border-box"></div>
<div class="abs" style="left:807px;top:566px;width:277px;height:40px;border:3px solid #e81123;box-sizing:border-box"></div>
<div class="abs" style="left:654px;top:508px;width:145px;height:43px;border:3px solid #e81123;box-sizing:border-box"></div>

</body></html>
